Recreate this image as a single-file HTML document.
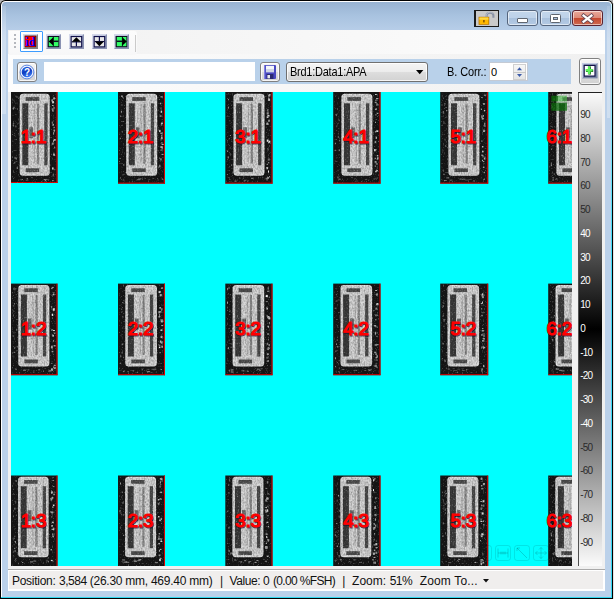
<!DOCTYPE html>
<html><head><meta charset="utf-8"><title>APA view</title>
<style>
html,body{margin:0;padding:0}
body{width:615px;height:599px;position:relative;overflow:hidden;background:#fff;font-family:"Liberation Sans",Arial,sans-serif;font-size:11px;color:#000}
#win{position:absolute;left:0;top:0;width:613px;height:599px;background:#000;border-radius:5.5px 5.5px 0 0;overflow:hidden}
#corner-l,#corner-r{position:absolute;top:0;width:6px;height:6px;background:#b4b4b4}
#frame{position:absolute;left:1px;top:1px;width:611px;height:597px;border-radius:4.5px 4.5px 0 0;background:#fff;overflow:hidden}
#frame2{position:absolute;left:1px;top:1px;width:609px;height:595px;border-radius:3.5px 3.5px 0 0;background:linear-gradient(to bottom,#98b3d2 0px,#a9c3e0 14px,#b9cfe9 30px,#bbd1ea 40px,#bbd1ea 100%)}
#cy-r{position:absolute;left:611px;top:4px;width:1px;height:593px;background:linear-gradient(to bottom,#c8f4ff,#40dcf8 40%,#30d8f4)}
#cy-b{position:absolute;left:1px;top:597px;width:611px;height:1px;background:#30d8f0}
#client{position:absolute;left:8px;top:30px;width:597px;height:561px;background:#f0f0f0}
.abs{position:absolute}
.sl{position:absolute;left:580.3px;width:24px;height:12px;line-height:12px;font-size:10px;letter-spacing:-0.9px;white-space:nowrap}
.cap{position:absolute;top:10px;height:14px;border:1px solid #55657d;border-radius:3px;box-shadow:inset 0 0 0 1px rgba(255,255,255,.55);background:linear-gradient(to bottom,#c3d6eb 0,#bdd2e9 49%,#a9c1dd 50%,#b4cae4 100%)}
.tb{position:absolute;top:34px;width:15px;height:15px}
.btn{position:absolute;border:1px solid #808080;border-radius:3px;background:linear-gradient(to bottom,#f4f4f4 0,#ececec 49%,#dedede 50%,#d2d2d2 100%);box-shadow:inset 0 0 0 1px rgba(255,255,255,.8);box-sizing:border-box}
.st{position:absolute;top:573px;height:16px;line-height:16px;font-size:12px;white-space:nowrap;color:#111}
</style></head><body>
<div id="corner-l" style="left:0"></div><div id="corner-r" style="left:607px"></div>
<div id="win"><div id="frame"><div id="frame2"></div></div></div>
<div class="abs" style="left:2px;top:6px;width:3.5px;height:108px;background:linear-gradient(to bottom,rgba(255,255,255,0.12),rgba(255,255,255,0.3) 30%,rgba(255,255,255,0.3))"></div><div class="abs" style="left:606.5px;top:6px;width:3.5px;height:112px;background:linear-gradient(to bottom,rgba(255,255,255,0.12),rgba(255,255,255,0.3) 30%,rgba(255,255,255,0.3))"></div>
<div id="cy-r"></div><div id="cy-b"></div>
<div class="abs" style="left:612px;top:4px;width:1px;height:595px;background:#000"></div>
<div class="abs" style="left:613px;top:3px;width:1px;height:596px;background:#e4e4e4"></div>

<!-- caption buttons -->
<div class="abs" style="left:474.4px;top:10px;width:24.7px;height:16.5px;background:#1a1a1a"></div>
<div class="abs" style="left:475.5px;top:11.2px;width:22.6px;height:14.4px;background:#cacaca"></div>
<svg class="abs" style="left:476px;top:11px" width="22" height="15" viewBox="0 0 22 15">
<path d="M10.6 7V4.4C10.6 0.8 17.4 0.8 17.4 4.4V6.8" fill="none" stroke="#8a93a6" stroke-width="2.1"/>
<path d="M10.2 6V4.2C10.4 0.9 16 0.2 17.2 2.6" fill="none" stroke="#c4cad6" stroke-width="0.8"/>
<rect x="2.6" y="5.8" width="10.6" height="8" fill="#b87400"/>
<rect x="3.4" y="6.5" width="9" height="6.6" fill="#ffb800"/>
<rect x="3.4" y="6.5" width="9" height="2.2" fill="#ffd840"/>
<rect x="7.2" y="9" width="1.4" height="2.4" fill="#7a4a00"/>
</svg>
<div class="cap" style="left:507px;width:29px"></div>
<div class="cap" style="left:540px;width:29px"></div>
<div class="cap" style="left:572px;width:28.6px;border-color:#5a2230;background:linear-gradient(to bottom,#e9a99b 0,#dd8a78 49%,#c4472e 50%,#cf6a50 100%)"></div>
<div class="abs" style="left:517px;top:18px;width:10.5px;height:4.5px;background:#fff;border:1px solid #5f6670;box-sizing:border-box;border-radius:1px"></div>
<div class="abs" style="left:550px;top:14px;width:11px;height:8.5px;background:#fff;border:1px solid #5f6670;box-sizing:border-box;border-radius:1.5px"></div>
<div class="abs" style="left:552.6px;top:16.6px;width:5.6px;height:3.3px;background:#a9c1dd;border:1px solid #5f6670;box-sizing:border-box"></div>
<svg class="abs" style="left:581px;top:13px" width="13" height="11" viewBox="0 0 13 11"><path d="M2.6 2.6L10.4 8.6M10.4 2.6L2.6 8.6" stroke="#6a4a55" stroke-width="4" stroke-linecap="square"/><path d="M2.6 2.6L10.4 8.6M10.4 2.6L2.6 8.6" stroke="#fff" stroke-width="2.3" stroke-linecap="square"/></svg>

<div id="client"></div>
<!-- toolbar row 1 -->
<div class="abs" style="left:8px;top:30px;width:597px;height:24px;background:linear-gradient(to right,#f1f1f1,#fdfdfd)"></div>
<div class="abs" style="left:8px;top:54px;width:597px;height:38px;background:linear-gradient(to right,#fdfdfd,#f0f0f0)"></div>
<div class="abs" style="left:9px;top:31px;width:128px;height:24px;border-radius:0 3px 3px 0;background:linear-gradient(to bottom,#fcfcfc,#f7f7f8)"></div>
<div class="abs" style="left:14px;top:34px;width:2px;height:2px;background:#b4b7bd;box-shadow:0 4px #b4b7bd,0 8px #b4b7bd,0 12px #b4b7bd"></div>
<div class="abs" style="left:135px;top:35px;width:1px;height:17px;background:#cacaca"></div>
<div class="abs" style="left:20px;top:31px;width:23px;height:21px;box-sizing:border-box;border:1px solid #3d9cff;background:#fff;border-radius:1px"></div>
<!-- icons -->
<svg class="tb" style="left:23.4px" viewBox="0 0 15 15"><rect width="15" height="15" fill="#808080"/><path d="M0 15L0 0L15 0L13 2L2 2L2 13Z" fill="#d4d8e8"/><rect x="1.6" y="1.6" width="11.5" height="11.5" fill="#3a0000"/><rect x="2.2" y="2.4" width="10.4" height="10.2" fill="#ff0000"/><text x="7.3" y="11.9" font-family="'Liberation Serif',serif" font-weight="bold" font-size="11.5" fill="#0000ff" text-anchor="middle" textLength="9.6" lengthAdjust="spacingAndGlyphs">id</text></svg>
<svg class="tb" style="left:46px" viewBox="0 0 15 15"><rect width="15" height="15" fill="#8a92b2"/><path d="M0 15L0 0L15 0L13.2 1.8L1.8 1.8L1.8 13.2Z" fill="#d4d8ea"/><rect x="1.6" y="2" width="11.6" height="11.2" fill="#0c1020"/><rect x="2.8" y="3" width="9.6" height="9.2" fill="#33ff66"/><path d="M7.3 3V12.2" stroke="#0c1020" stroke-width="1"/><path d="M7.3 7.3H12.4" stroke="#0c1020" stroke-width="1.5"/><path d="M2.6 7.4L7.3 3.2V11.6Z" fill="#000"/></svg>
<svg class="tb" style="left:68.6px" viewBox="0 0 15 15"><rect width="15" height="15" fill="#8a92b2"/><path d="M0 15L0 0L15 0L13.2 1.8L1.8 1.8L1.8 13.2Z" fill="#d4d8ea"/><rect x="1.6" y="2" width="11.6" height="11.4" fill="#10104a"/><rect x="2.7" y="3.1" width="9.4" height="9.2" fill="#e9e9e9"/><path d="M7.4 7V12.3" stroke="#10104a" stroke-width="1.2"/><path d="M2.7 7.9H12.1" stroke="#10104a" stroke-width="1.1"/><path d="M7.4 3.2L11.9 7.8H2.9Z" fill="#000"/></svg>
<svg class="tb" style="left:91.5px" viewBox="0 0 15 15"><rect width="15" height="15" fill="#8a92b2"/><path d="M0 15L0 0L15 0L13.2 1.8L1.8 1.8L1.8 13.2Z" fill="#d4d8ea"/><rect x="1.6" y="2" width="11.6" height="11.4" fill="#10104a"/><rect x="2.7" y="3.1" width="9.4" height="9.2" fill="#e9e9e9"/><path d="M7.4 3.1V8" stroke="#10104a" stroke-width="1.2"/><path d="M2.7 7.5H12.1" stroke="#10104a" stroke-width="1.1"/><path d="M7.4 12.2L11.9 7.6H2.9Z" fill="#000"/></svg>
<svg class="tb" style="left:114.2px" viewBox="0 0 15 15"><rect width="15" height="15" fill="#8a92b2"/><path d="M0 15L0 0L15 0L13.2 1.8L1.8 1.8L1.8 13.2Z" fill="#d4d8ea"/><rect x="1.6" y="2" width="11.6" height="11.2" fill="#0c1020"/><rect x="2.8" y="3" width="9.6" height="9.2" fill="#33ff66"/><path d="M8.4 3V12.2" stroke="#0c1020" stroke-width="1"/><path d="M2.8 7.3H8.4" stroke="#0c1020" stroke-width="1.5"/><path d="M12.8 7.4L8.4 3.2V11.6Z" fill="#000"/></svg>

<!-- toolbar row 2 -->
<div class="abs" style="left:13px;top:59px;width:558px;height:25px;background:#b9d1ea"></div>
<div class="btn" style="left:17px;top:62px;width:20px;height:20px"></div>
<svg class="abs" style="left:18.8px;top:64px" width="16" height="16" viewBox="0 0 16 16"><defs><linearGradient id="hg" x1="0" y1="0" x2="0.4" y2="1"><stop offset="0" stop-color="#2a66e8"/><stop offset="0.55" stop-color="#0e3cc0"/><stop offset="1" stop-color="#3a78f0"/></linearGradient></defs><circle cx="8" cy="8" r="6.9" fill="#eef3ff" stroke="#4a78dc" stroke-width="0.9"/><circle cx="8" cy="8" r="5.3" fill="url(#hg)"/><text x="8" y="11.6" font-family="'Liberation Sans',sans-serif" font-weight="bold" font-size="10" fill="#fff" text-anchor="middle">?</text></svg>
<div class="abs" style="left:43.5px;top:62px;width:211.5px;height:18.6px;background:#fff"></div>
<div class="btn" style="left:260px;top:62px;width:20px;height:20px"></div>
<svg class="abs" style="left:264px;top:65px" width="12" height="14" viewBox="0 0 12 14"><rect x="0" y="0" width="12" height="14" rx="1" fill="#4848c0"/><rect x="0" y="0" width="1.2" height="14" fill="#8080e0"/><rect x="2" y="0.8" width="8" height="6.4" fill="#f4f6fa"/><rect x="2" y="4" width="8" height="3.2" fill="#cfd6e6"/><rect x="2.6" y="9" width="6.8" height="5" fill="#2a2a70"/><rect x="3.4" y="10" width="2.6" height="3.4" fill="#e8e8f0"/></svg>
<div class="btn" style="left:286px;top:62px;width:142px;height:20px;border-color:#707070"></div>
<div class="abs" style="left:290px;top:65px;height:14px;line-height:14px;font-size:11px;letter-spacing:-0.25px;white-space:nowrap;transform:scaleY(1.08);transform-origin:0 80%" id="cbt">Brd1:Data1:APA</div>
<svg class="abs" style="left:416px;top:70px" width="8" height="5" viewBox="0 0 8 5"><path d="M0 0H7.4L3.7 4.2Z" fill="#000"/></svg>
<div class="abs" style="left:447px;top:65px;height:14px;line-height:14px;font-size:11px;letter-spacing:-0.1px;white-space:nowrap;transform:scaleY(1.08);transform-origin:0 80%" id="bct">B. Corr.:</div>
<div class="abs" style="left:489px;top:62px;width:39px;height:19px;background:#fff;border:1px solid #c4cad4;box-sizing:border-box"></div>
<div class="abs" style="left:491px;top:65px;height:14px;line-height:14px;font-size:11px">0</div>
<div class="abs" style="left:513px;top:64px;width:13px;height:16px;background:linear-gradient(to bottom,#f8f8f8,#e4e4e4);box-shadow:0 0 0 1px #d0d0d0 inset"></div>
<div class="abs" style="left:513px;top:72px;width:13px;height:1px;background:#c8c8c8"></div>
<svg class="abs" style="left:516px;top:66px" width="8" height="12" viewBox="0 0 8 12"><path d="M1 4.2L3.5 1.2L6 4.2Z" fill="#3c5aa8"/><path d="M1 8L3.5 11L6 8Z" fill="#3c5aa8"/></svg>
<div class="btn" style="left:579px;top:58px;width:22px;height:27px"></div>
<svg class="abs" style="left:582.4px;top:63.2px" width="15.6" height="15.4" viewBox="0 0 15.6 15.4"><rect width="15.6" height="15.4" fill="#7a86a6"/><path d="M0 15.4L0 0L15.6 0L13.8 1.6L1.6 1.6L1.6 13.8Z" fill="#c4cce4"/><rect x="1.6" y="1.8" width="12" height="11.9" fill="#14144a"/><rect x="2.8" y="3" width="9.6" height="9.5" fill="#fff"/><path d="M7.6 3.6V11.6M4 7.8H11.2" stroke="#0c500c" stroke-width="2.6"/><path d="M7.1 3.2V11M3.6 7.2H10.6" stroke="#5cf05c" stroke-width="2.5"/></svg>

<svg id="img" width="561" height="474" viewBox="0 0 561 474" style="position:absolute;left:11px;top:92px;display:block">
<defs>
<filter id="grain" x="0" y="0" width="100%" height="100%" color-interpolation-filters="sRGB">
<feTurbulence type="fractalNoise" baseFrequency="0.75 0.5" numOctaves="2" seed="3" result="n"/>
<feColorMatrix in="n" type="matrix" values="0 0 0 0 0  0 0 0 0 0  0 0 0 0 0  0.55 0 0 0 -0.18" result="a"/>
<feComposite in="a" in2="SourceGraphic" operator="in"/>
</filter>
<filter id="grainw" x="0" y="0" width="100%" height="100%" color-interpolation-filters="sRGB">
<feTurbulence type="fractalNoise" baseFrequency="0.8 0.55" numOctaves="2" seed="11" result="n"/>
<feColorMatrix in="n" type="matrix" values="0 0 0 0 1  0 0 0 0 1  0 0 0 0 1  0 1.1 0 0 -0.64" result="a"/>
<feComposite in="a" in2="SourceGraphic" operator="in"/>
</filter>
</defs>
<rect width="561" height="474" fill="#00ffff"/>
<g id="mods">
<g transform="translate(0.0,0.0)">
<rect width="46.5" height="91" fill="#171717"/>
<rect x="8.7" y="1.8" width="30" height="82" rx="3.5" fill="#e6e6e6"/>
<rect x="9.7" y="2.8" width="28.0" height="80.0" rx="2.6" fill="#d6d6d6"/>
<rect x="14.7" y="5.1" width="13.5" height="3.8" fill="#505050"/>
<rect x="11.3" y="11.3" width="6" height="62" fill="#3c3c3c"/>
<rect x="25.9" y="11.8" width="2.2" height="60" fill="#8c8c8c"/>
<rect x="22.9" y="12.8" width="1.2" height="58" fill="#b4b4b4"/>
<rect x="33.3" y="11.3" width="3.3" height="62" fill="#4c4c4c"/>
<rect x="14.7" y="76.3" width="13.5" height="3.8" fill="#505050"/>
<rect x="18.3" y="35.3" width="3.8" height="11" fill="#6e6e6e"/>
<rect x="40.7" y="29.5" width="1" height="2.2" fill="rgb(132,132,132)"/>
<rect x="42.1" y="10.0" width="1" height="1" fill="rgb(249,249,249)"/>
<rect x="41.5" y="9.3" width="1" height="2.2" fill="rgb(181,181,181)"/>
<rect x="42.8" y="38.1" width="1" height="2.2" fill="rgb(151,151,151)"/>
<rect x="43.2" y="55.3" width="1" height="1" fill="rgb(221,221,221)"/>
<rect x="42.9" y="6.0" width="1.5" height="1" fill="rgb(194,194,194)"/>
<rect x="42.0" y="48.0" width="1" height="2.2" fill="rgb(166,166,166)"/>
<rect x="40.8" y="50.6" width="2" height="2.2" fill="rgb(144,144,144)"/>
<rect x="40.4" y="7.3" width="1.5" height="2.2" fill="rgb(172,172,172)"/>
<rect x="42.7" y="47.2" width="2" height="1.5" fill="rgb(239,239,239)"/>
<rect x="41.0" y="32.7" width="2" height="1" fill="rgb(166,166,166)"/>
<rect x="41.2" y="9.0" width="1.5" height="2.2" fill="rgb(246,246,246)"/>
<rect x="42.1" y="40.2" width="1" height="2.2" fill="rgb(138,138,138)"/>
<rect x="42.6" y="37.5" width="1.5" height="1.5" fill="rgb(158,158,158)"/>
<rect x="42.3" y="5.3" width="1.5" height="2.2" fill="rgb(200,200,200)"/>
<rect x="41.8" y="31.8" width="1" height="1" fill="rgb(236,236,236)"/>
<rect x="41.7" y="82.3" width="1" height="2.2" fill="rgb(136,136,136)"/>
<rect x="42.3" y="61.6" width="1.5" height="2.2" fill="rgb(234,234,234)"/>
<rect x="42.3" y="34.8" width="1.5" height="1.5" fill="rgb(125,125,125)"/>
<rect x="40.6" y="16.3" width="1" height="1.5" fill="rgb(135,135,135)"/>
<rect x="41.0" y="13.0" width="1.5" height="1" fill="rgb(220,220,220)"/>
<rect x="41.5" y="16.1" width="1" height="1.5" fill="rgb(191,191,191)"/>
<rect x="41.1" y="75.4" width="1.5" height="2.2" fill="rgb(226,226,226)"/>
<rect x="43.3" y="77.2" width="1" height="1" fill="rgb(158,158,158)"/>
<rect x="42.3" y="14.9" width="1.5" height="2.2" fill="rgb(123,123,123)"/>
<rect x="41.1" y="17.5" width="1.5" height="2.2" fill="rgb(157,157,157)"/>
<rect x="4.0" y="33.4" width="1" height="2" fill="rgb(86,86,86)"/>
<rect x="5.8" y="75.0" width="1" height="2" fill="rgb(153,153,153)"/>
<rect x="3.6" y="64.9" width="1" height="2" fill="rgb(169,169,169)"/>
<rect x="3.3" y="69.8" width="1" height="1.5" fill="rgb(121,121,121)"/>
<rect x="4.4" y="10.8" width="1" height="1" fill="rgb(77,77,77)"/>
<rect x="2.4" y="7.7" width="1" height="1" fill="rgb(90,90,90)"/>
<rect x="1.7" y="30.9" width="1" height="2" fill="rgb(70,70,70)"/>
<rect x="2.0" y="14.9" width="1" height="2" fill="rgb(116,116,116)"/>
<rect x="5.4" y="4.2" width="1" height="1.5" fill="rgb(148,148,148)"/>
<rect x="2.6" y="14.6" width="1" height="2" fill="rgb(114,114,114)"/>
<rect x="2.1" y="33.0" width="1" height="1.5" fill="rgb(132,132,132)"/>
<rect x="2.9" y="42.8" width="1" height="1" fill="rgb(88,88,88)"/>
<rect x="4.8" y="65.7" width="1" height="2" fill="rgb(131,131,131)"/>
<rect x="1.6" y="15.7" width="1" height="1.5" fill="rgb(137,137,137)"/>
<rect x="8.6" y="87.2" width="3" height="1" fill="rgb(73,73,73)"/>
<rect x="14.5" y="87.6" width="3" height="1" fill="rgb(81,81,81)"/>
<rect x="35.5" y="87.1" width="2" height="1" fill="rgb(91,91,91)"/>
<rect x="32.7" y="87.2" width="3" height="1" fill="rgb(169,169,169)"/>
<rect x="15.7" y="86.1" width="1" height="1" fill="rgb(170,170,170)"/>
<rect x="34.0" y="88.2" width="1" height="1" fill="rgb(164,164,164)"/>
<rect x="10.7" y="87.0" width="1" height="1" fill="rgb(163,163,163)"/>
<rect x="41.1" y="88.1" width="2" height="1" fill="rgb(130,130,130)"/>
<rect x="45.5" y="0" width="1" height="91" fill="#e00000"/>
<rect x="0" y="90" width="46.5" height="1" fill="#e00000"/>
</g>
<g transform="translate(107.0,0.0)">
<rect width="47" height="91.6" fill="#171717"/>
<rect x="8.2" y="1.8" width="31" height="82" rx="3.5" fill="#e6e6e6"/>
<rect x="9.2" y="2.8" width="29.0" height="80.0" rx="2.6" fill="#d6d6d6"/>
<rect x="14.2" y="5.1" width="13.5" height="3.8" fill="#505050"/>
<rect x="10.8" y="11.3" width="6" height="62" fill="#3c3c3c"/>
<rect x="25.4" y="11.8" width="2.2" height="60" fill="#8c8c8c"/>
<rect x="22.4" y="12.8" width="1.2" height="58" fill="#b4b4b4"/>
<rect x="32.8" y="11.3" width="3.3" height="62" fill="#4c4c4c"/>
<rect x="14.2" y="76.3" width="13.5" height="3.8" fill="#505050"/>
<rect x="17.8" y="35.3" width="3.8" height="11" fill="#6e6e6e"/>
<rect x="42.6" y="18.6" width="1.5" height="2.2" fill="rgb(208,208,208)"/>
<rect x="43.8" y="86.6" width="1" height="1" fill="rgb(213,213,213)"/>
<rect x="42.2" y="10.7" width="1" height="1.5" fill="rgb(206,206,206)"/>
<rect x="43.6" y="55.4" width="1.5" height="2.2" fill="rgb(120,120,120)"/>
<rect x="42.8" y="31.4" width="1.5" height="2.2" fill="rgb(150,150,150)"/>
<rect x="42.2" y="66.2" width="1.5" height="2.2" fill="rgb(165,165,165)"/>
<rect x="43.3" y="30.5" width="1.5" height="1.5" fill="rgb(221,221,221)"/>
<rect x="41.0" y="65.6" width="1" height="1" fill="rgb(160,160,160)"/>
<rect x="42.6" y="4.4" width="2" height="1" fill="rgb(239,239,239)"/>
<rect x="42.6" y="54.4" width="2" height="1.5" fill="rgb(241,241,241)"/>
<rect x="42.5" y="15.3" width="1" height="2.2" fill="rgb(125,125,125)"/>
<rect x="42.4" y="57.6" width="1.5" height="1" fill="rgb(155,155,155)"/>
<rect x="41.4" y="72.7" width="1" height="1.5" fill="rgb(184,184,184)"/>
<rect x="43.1" y="44.9" width="1.5" height="2.2" fill="rgb(203,203,203)"/>
<rect x="41.1" y="37.9" width="1.5" height="2.2" fill="rgb(210,210,210)"/>
<rect x="43.6" y="51.9" width="2" height="1" fill="rgb(227,227,227)"/>
<rect x="42.4" y="47.5" width="1.5" height="1" fill="rgb(124,124,124)"/>
<rect x="43.2" y="54.1" width="1" height="1" fill="rgb(158,158,158)"/>
<rect x="43.0" y="42.5" width="1.5" height="2.2" fill="rgb(135,135,135)"/>
<rect x="42.5" y="46.4" width="2" height="1" fill="rgb(147,147,147)"/>
<rect x="41.6" y="23.3" width="2" height="1.5" fill="rgb(145,145,145)"/>
<rect x="43.1" y="50.1" width="1.5" height="1.5" fill="rgb(136,136,136)"/>
<rect x="42.3" y="54.4" width="2" height="1.5" fill="rgb(171,171,171)"/>
<rect x="42.4" y="40.7" width="2" height="1" fill="rgb(242,242,242)"/>
<rect x="43.5" y="61.9" width="2" height="1" fill="rgb(186,186,186)"/>
<rect x="41.1" y="73.9" width="1.5" height="1.5" fill="rgb(151,151,151)"/>
<rect x="4.5" y="29.0" width="1" height="1" fill="rgb(124,124,124)"/>
<rect x="2.9" y="20.2" width="1" height="1" fill="rgb(85,85,85)"/>
<rect x="4.4" y="82.4" width="1" height="1" fill="rgb(116,116,116)"/>
<rect x="2.1" y="23.7" width="1" height="1" fill="rgb(129,129,129)"/>
<rect x="1.9" y="65.9" width="1" height="1" fill="rgb(132,132,132)"/>
<rect x="5.2" y="86.7" width="1" height="2" fill="rgb(90,90,90)"/>
<rect x="3.8" y="38.9" width="1" height="1.5" fill="rgb(113,113,113)"/>
<rect x="2.9" y="18.8" width="1" height="1.5" fill="rgb(162,162,162)"/>
<rect x="4.0" y="3.7" width="1" height="2" fill="rgb(126,126,126)"/>
<rect x="3.0" y="3.5" width="1" height="1.5" fill="rgb(149,149,149)"/>
<rect x="1.8" y="45.8" width="1" height="1" fill="rgb(170,170,170)"/>
<rect x="2.0" y="85.2" width="1" height="1.5" fill="rgb(103,103,103)"/>
<rect x="5.0" y="5.4" width="1" height="1" fill="rgb(104,104,104)"/>
<rect x="5.3" y="72.2" width="1" height="1.5" fill="rgb(156,156,156)"/>
<rect x="18.8" y="87.2" width="3" height="1" fill="rgb(135,135,135)"/>
<rect x="22.3" y="86.4" width="1" height="1" fill="rgb(105,105,105)"/>
<rect x="34.2" y="85.9" width="2" height="1" fill="rgb(79,79,79)"/>
<rect x="39.6" y="87.5" width="1" height="1" fill="rgb(103,103,103)"/>
<rect x="26.7" y="86.1" width="1" height="1" fill="rgb(103,103,103)"/>
<rect x="20.7" y="86.5" width="2" height="1" fill="rgb(140,140,140)"/>
<rect x="39.1" y="86.2" width="1" height="1" fill="rgb(86,86,86)"/>
<rect x="23.5" y="86.1" width="1" height="1" fill="rgb(84,84,84)"/>
<rect x="46" y="0" width="1" height="91.6" fill="#e00000"/>
<rect x="0" y="90.6" width="47" height="1" fill="#e00000"/>
</g>
<g transform="translate(214.3,0.0)">
<rect width="47.2" height="91.6" fill="#171717"/>
<rect x="8.2" y="1.8" width="31" height="82" rx="3.5" fill="#e6e6e6"/>
<rect x="9.2" y="2.8" width="29.0" height="80.0" rx="2.6" fill="#d6d6d6"/>
<rect x="14.2" y="5.1" width="13.5" height="3.8" fill="#505050"/>
<rect x="10.8" y="11.3" width="6" height="62" fill="#3c3c3c"/>
<rect x="25.4" y="11.8" width="2.2" height="60" fill="#8c8c8c"/>
<rect x="22.4" y="12.8" width="1.2" height="58" fill="#b4b4b4"/>
<rect x="32.8" y="11.3" width="3.3" height="62" fill="#4c4c4c"/>
<rect x="14.2" y="76.3" width="13.5" height="3.8" fill="#505050"/>
<rect x="17.8" y="35.3" width="3.8" height="11" fill="#6e6e6e"/>
<rect x="41.3" y="24.4" width="2" height="1.5" fill="rgb(199,199,199)"/>
<rect x="41.4" y="47.5" width="2" height="2.2" fill="rgb(234,234,234)"/>
<rect x="41.8" y="17.2" width="1.5" height="1" fill="rgb(124,124,124)"/>
<rect x="43.0" y="3.3" width="2" height="1.5" fill="rgb(168,168,168)"/>
<rect x="42.1" y="23.0" width="2" height="1.5" fill="rgb(230,230,230)"/>
<rect x="43.5" y="48.7" width="1.5" height="2.2" fill="rgb(249,249,249)"/>
<rect x="41.4" y="20.4" width="2" height="2.2" fill="rgb(170,170,170)"/>
<rect x="42.0" y="56.4" width="1" height="1" fill="rgb(208,208,208)"/>
<rect x="42.7" y="3.2" width="1.5" height="1" fill="rgb(185,185,185)"/>
<rect x="42.8" y="6.7" width="2" height="2.2" fill="rgb(217,217,217)"/>
<rect x="42.6" y="85.1" width="1" height="1.5" fill="rgb(195,195,195)"/>
<rect x="41.6" y="17.9" width="1.5" height="1.5" fill="rgb(120,120,120)"/>
<rect x="43.8" y="84.3" width="1" height="1" fill="rgb(202,202,202)"/>
<rect x="41.7" y="84.7" width="1" height="1" fill="rgb(211,211,211)"/>
<rect x="41.0" y="30.7" width="2" height="2.2" fill="rgb(191,191,191)"/>
<rect x="42.3" y="19.2" width="1" height="1.5" fill="rgb(121,121,121)"/>
<rect x="41.2" y="71.9" width="1.5" height="1" fill="rgb(130,130,130)"/>
<rect x="42.7" y="27.6" width="2" height="2.2" fill="rgb(141,141,141)"/>
<rect x="41.2" y="75.0" width="1.5" height="2.2" fill="rgb(219,219,219)"/>
<rect x="41.2" y="86.3" width="1" height="2.2" fill="rgb(157,157,157)"/>
<rect x="42.7" y="78.4" width="1" height="2.2" fill="rgb(249,249,249)"/>
<rect x="42.5" y="66.4" width="2" height="2.2" fill="rgb(124,124,124)"/>
<rect x="43.0" y="70.3" width="1" height="1" fill="rgb(178,178,178)"/>
<rect x="42.7" y="5.6" width="1.5" height="1.5" fill="rgb(146,146,146)"/>
<rect x="42.7" y="49.8" width="1.5" height="1.5" fill="rgb(182,182,182)"/>
<rect x="43.3" y="2.3" width="2" height="1" fill="rgb(248,248,248)"/>
<rect x="1.8" y="58.4" width="1" height="1.5" fill="rgb(164,164,164)"/>
<rect x="1.8" y="23.6" width="1" height="1" fill="rgb(103,103,103)"/>
<rect x="2.4" y="64.4" width="1" height="2" fill="rgb(164,164,164)"/>
<rect x="3.7" y="85.5" width="1" height="1" fill="rgb(118,118,118)"/>
<rect x="4.6" y="43.0" width="1" height="1" fill="rgb(168,168,168)"/>
<rect x="4.4" y="54.8" width="1" height="2" fill="rgb(79,79,79)"/>
<rect x="2.6" y="14.6" width="1" height="2" fill="rgb(165,165,165)"/>
<rect x="4.1" y="28.1" width="1" height="1.5" fill="rgb(71,71,71)"/>
<rect x="2.7" y="7.2" width="1" height="1" fill="rgb(156,156,156)"/>
<rect x="4.5" y="61.3" width="1" height="2" fill="rgb(107,107,107)"/>
<rect x="3.6" y="46.2" width="1" height="1" fill="rgb(129,129,129)"/>
<rect x="4.0" y="87.0" width="1" height="1" fill="rgb(109,109,109)"/>
<rect x="1.6" y="82.1" width="1" height="1" fill="rgb(128,128,128)"/>
<rect x="5.9" y="72.2" width="1" height="1.5" fill="rgb(127,127,127)"/>
<rect x="18.2" y="88.5" width="1" height="1" fill="rgb(96,96,96)"/>
<rect x="25.8" y="85.8" width="2" height="1" fill="rgb(137,137,137)"/>
<rect x="40.3" y="85.8" width="3" height="1" fill="rgb(150,150,150)"/>
<rect x="14.0" y="85.7" width="1" height="1" fill="rgb(116,116,116)"/>
<rect x="22.5" y="88.4" width="1" height="1" fill="rgb(120,120,120)"/>
<rect x="9.2" y="88.6" width="2" height="1" fill="rgb(157,157,157)"/>
<rect x="18.9" y="87.8" width="2" height="1" fill="rgb(123,123,123)"/>
<rect x="17.7" y="85.7" width="1" height="1" fill="rgb(112,112,112)"/>
<rect x="46.2" y="0" width="1" height="91.6" fill="#e00000"/>
<rect x="0" y="90.6" width="47.2" height="1" fill="#e00000"/>
</g>
<g transform="translate(322.2,0.0)">
<rect width="47.3" height="91.6" fill="#171717"/>
<rect x="8.2" y="1.8" width="31" height="82" rx="3.5" fill="#e6e6e6"/>
<rect x="9.2" y="2.8" width="29.0" height="80.0" rx="2.6" fill="#d6d6d6"/>
<rect x="14.2" y="5.1" width="13.5" height="3.8" fill="#505050"/>
<rect x="10.8" y="11.3" width="6" height="62" fill="#3c3c3c"/>
<rect x="25.4" y="11.8" width="2.2" height="60" fill="#8c8c8c"/>
<rect x="22.4" y="12.8" width="1.2" height="58" fill="#b4b4b4"/>
<rect x="32.8" y="11.3" width="3.3" height="62" fill="#4c4c4c"/>
<rect x="14.2" y="76.3" width="13.5" height="3.8" fill="#505050"/>
<rect x="17.8" y="35.3" width="3.8" height="11" fill="#6e6e6e"/>
<rect x="41.8" y="29.8" width="1" height="1" fill="rgb(221,221,221)"/>
<rect x="43.6" y="63.0" width="1.5" height="1.5" fill="rgb(194,194,194)"/>
<rect x="41.9" y="7.6" width="1.5" height="1.5" fill="rgb(139,139,139)"/>
<rect x="43.4" y="66.7" width="1" height="1" fill="rgb(191,191,191)"/>
<rect x="41.6" y="73.4" width="1" height="1.5" fill="rgb(158,158,158)"/>
<rect x="41.7" y="39.3" width="1.5" height="1" fill="rgb(215,215,215)"/>
<rect x="42.7" y="71.5" width="2" height="1" fill="rgb(172,172,172)"/>
<rect x="43.0" y="6.2" width="2" height="1" fill="rgb(235,235,235)"/>
<rect x="41.6" y="57.2" width="2" height="1" fill="rgb(132,132,132)"/>
<rect x="42.0" y="16.6" width="1.5" height="1.5" fill="rgb(192,192,192)"/>
<rect x="43.8" y="65.3" width="1.5" height="2.2" fill="rgb(186,186,186)"/>
<rect x="42.2" y="22.4" width="1" height="1" fill="rgb(220,220,220)"/>
<rect x="40.9" y="57.1" width="1.5" height="2.2" fill="rgb(248,248,248)"/>
<rect x="43.6" y="20.8" width="1.5" height="1" fill="rgb(235,235,235)"/>
<rect x="41.5" y="48.9" width="1.5" height="2.2" fill="rgb(164,164,164)"/>
<rect x="41.5" y="9.8" width="2" height="1" fill="rgb(186,186,186)"/>
<rect x="43.1" y="77.9" width="1.5" height="1.5" fill="rgb(225,225,225)"/>
<rect x="41.4" y="65.8" width="1.5" height="1" fill="rgb(189,189,189)"/>
<rect x="42.5" y="44.6" width="1" height="2.2" fill="rgb(212,212,212)"/>
<rect x="42.7" y="45.1" width="1" height="1.5" fill="rgb(175,175,175)"/>
<rect x="41.9" y="78.8" width="1.5" height="1.5" fill="rgb(234,234,234)"/>
<rect x="43.5" y="74.6" width="1" height="1" fill="rgb(125,125,125)"/>
<rect x="43.1" y="38.4" width="2" height="1.5" fill="rgb(241,241,241)"/>
<rect x="42.0" y="2.0" width="1.5" height="1" fill="rgb(239,239,239)"/>
<rect x="41.4" y="69.0" width="2" height="2.2" fill="rgb(158,158,158)"/>
<rect x="43.3" y="11.3" width="1" height="2.2" fill="rgb(237,237,237)"/>
<rect x="1.5" y="68.5" width="1" height="1" fill="rgb(86,86,86)"/>
<rect x="1.7" y="50.7" width="1" height="1.5" fill="rgb(161,161,161)"/>
<rect x="4.3" y="84.4" width="1" height="2" fill="rgb(137,137,137)"/>
<rect x="4.9" y="39.4" width="1" height="1" fill="rgb(82,82,82)"/>
<rect x="5.7" y="27.7" width="1" height="1.5" fill="rgb(94,94,94)"/>
<rect x="5.1" y="24.3" width="1" height="1" fill="rgb(70,70,70)"/>
<rect x="6.0" y="48.0" width="1" height="1.5" fill="rgb(105,105,105)"/>
<rect x="5.5" y="57.2" width="1" height="2" fill="rgb(130,130,130)"/>
<rect x="2.6" y="22.1" width="1" height="2" fill="rgb(122,122,122)"/>
<rect x="1.7" y="57.6" width="1" height="1.5" fill="rgb(94,94,94)"/>
<rect x="4.4" y="77.7" width="1" height="1.5" fill="rgb(80,80,80)"/>
<rect x="3.4" y="21.5" width="1" height="1" fill="rgb(117,117,117)"/>
<rect x="4.6" y="44.2" width="1" height="1.5" fill="rgb(161,161,161)"/>
<rect x="3.3" y="33.0" width="1" height="1.5" fill="rgb(70,70,70)"/>
<rect x="32.0" y="87.1" width="2" height="1" fill="rgb(96,96,96)"/>
<rect x="41.1" y="86.4" width="1" height="1" fill="rgb(94,94,94)"/>
<rect x="21.3" y="86.2" width="1" height="1" fill="rgb(107,107,107)"/>
<rect x="40.4" y="87.0" width="1" height="1" fill="rgb(93,93,93)"/>
<rect x="22.1" y="88.5" width="3" height="1" fill="rgb(77,77,77)"/>
<rect x="8.8" y="86.7" width="1" height="1" fill="rgb(97,97,97)"/>
<rect x="41.3" y="85.8" width="3" height="1" fill="rgb(76,76,76)"/>
<rect x="5.4" y="86.7" width="2" height="1" fill="rgb(161,161,161)"/>
<rect x="46.3" y="0" width="1" height="91.6" fill="#e00000"/>
<rect x="0" y="90.6" width="47.3" height="1" fill="#e00000"/>
</g>
<g transform="translate(429.2,0.0)">
<rect width="48" height="91.6" fill="#171717"/>
<rect x="8.2" y="1.8" width="31" height="82" rx="3.5" fill="#e6e6e6"/>
<rect x="9.2" y="2.8" width="29.0" height="80.0" rx="2.6" fill="#d6d6d6"/>
<rect x="14.2" y="5.1" width="13.5" height="3.8" fill="#505050"/>
<rect x="10.8" y="11.3" width="6" height="62" fill="#3c3c3c"/>
<rect x="25.4" y="11.8" width="2.2" height="60" fill="#8c8c8c"/>
<rect x="22.4" y="12.8" width="1.2" height="58" fill="#b4b4b4"/>
<rect x="32.8" y="11.3" width="3.3" height="62" fill="#4c4c4c"/>
<rect x="14.2" y="76.3" width="13.5" height="3.8" fill="#505050"/>
<rect x="17.8" y="35.3" width="3.8" height="11" fill="#6e6e6e"/>
<rect x="43.9" y="64.7" width="1.5" height="1" fill="rgb(162,162,162)"/>
<rect x="43.7" y="17.9" width="1" height="1.5" fill="rgb(239,239,239)"/>
<rect x="41.9" y="58.9" width="1.5" height="1.5" fill="rgb(215,215,215)"/>
<rect x="40.7" y="16.5" width="1" height="1.5" fill="rgb(191,191,191)"/>
<rect x="43.5" y="38.0" width="1.5" height="1.5" fill="rgb(173,173,173)"/>
<rect x="41.7" y="67.8" width="1" height="1" fill="rgb(230,230,230)"/>
<rect x="41.3" y="62.4" width="1" height="1.5" fill="rgb(234,234,234)"/>
<rect x="43.6" y="33.2" width="2" height="1.5" fill="rgb(127,127,127)"/>
<rect x="42.7" y="23.2" width="1" height="1.5" fill="rgb(223,223,223)"/>
<rect x="40.9" y="5.0" width="1.5" height="1" fill="rgb(135,135,135)"/>
<rect x="43.6" y="66.0" width="1.5" height="1.5" fill="rgb(206,206,206)"/>
<rect x="43.8" y="30.7" width="1.5" height="2.2" fill="rgb(131,131,131)"/>
<rect x="41.7" y="63.3" width="1.5" height="1" fill="rgb(190,190,190)"/>
<rect x="42.6" y="63.8" width="1" height="1" fill="rgb(136,136,136)"/>
<rect x="43.0" y="11.2" width="1.5" height="1.5" fill="rgb(239,239,239)"/>
<rect x="43.3" y="80.2" width="1.5" height="1" fill="rgb(153,153,153)"/>
<rect x="43.7" y="2.7" width="2" height="1" fill="rgb(197,197,197)"/>
<rect x="41.7" y="54.0" width="1.5" height="1.5" fill="rgb(201,201,201)"/>
<rect x="42.6" y="69.1" width="1.5" height="1" fill="rgb(170,170,170)"/>
<rect x="40.9" y="23.2" width="1.5" height="2.2" fill="rgb(128,128,128)"/>
<rect x="41.2" y="48.6" width="1" height="1" fill="rgb(229,229,229)"/>
<rect x="41.0" y="24.7" width="1.5" height="1.5" fill="rgb(144,144,144)"/>
<rect x="43.8" y="86.6" width="1" height="1" fill="rgb(164,164,164)"/>
<rect x="42.7" y="37.7" width="2" height="2.2" fill="rgb(180,180,180)"/>
<rect x="42.8" y="74.5" width="1.5" height="1.5" fill="rgb(151,151,151)"/>
<rect x="41.6" y="25.9" width="2" height="1.5" fill="rgb(185,185,185)"/>
<rect x="2.6" y="19.1" width="1" height="1" fill="rgb(101,101,101)"/>
<rect x="5.5" y="15.1" width="1" height="1" fill="rgb(144,144,144)"/>
<rect x="3.3" y="29.9" width="1" height="2" fill="rgb(101,101,101)"/>
<rect x="4.4" y="47.1" width="1" height="2" fill="rgb(82,82,82)"/>
<rect x="1.7" y="41.7" width="1" height="1.5" fill="rgb(70,70,70)"/>
<rect x="2.5" y="77.6" width="1" height="1.5" fill="rgb(127,127,127)"/>
<rect x="2.8" y="5.5" width="1" height="1" fill="rgb(85,85,85)"/>
<rect x="5.9" y="18.2" width="1" height="1" fill="rgb(144,144,144)"/>
<rect x="3.2" y="81.6" width="1" height="1.5" fill="rgb(92,92,92)"/>
<rect x="5.0" y="53.6" width="1" height="1" fill="rgb(155,155,155)"/>
<rect x="4.2" y="11.1" width="1" height="1.5" fill="rgb(149,149,149)"/>
<rect x="3.2" y="20.6" width="1" height="1" fill="rgb(88,88,88)"/>
<rect x="2.6" y="19.5" width="1" height="2" fill="rgb(146,146,146)"/>
<rect x="2.4" y="57.8" width="1" height="1.5" fill="rgb(71,71,71)"/>
<rect x="19.4" y="86.6" width="2" height="1" fill="rgb(149,149,149)"/>
<rect x="6.1" y="85.4" width="3" height="1" fill="rgb(133,133,133)"/>
<rect x="22.3" y="86.7" width="3" height="1" fill="rgb(120,120,120)"/>
<rect x="25.0" y="87.5" width="3" height="1" fill="rgb(81,81,81)"/>
<rect x="9.5" y="87.7" width="2" height="1" fill="rgb(122,122,122)"/>
<rect x="29.7" y="86.8" width="2" height="1" fill="rgb(76,76,76)"/>
<rect x="32.8" y="88.4" width="2" height="1" fill="rgb(123,123,123)"/>
<rect x="3.7" y="88.0" width="3" height="1" fill="rgb(116,116,116)"/>
<rect x="47" y="0" width="1" height="91.6" fill="#e00000"/>
<rect x="0" y="90.6" width="48" height="1" fill="#e00000"/>
</g>
<g transform="translate(537.2,0.0)">
<rect width="47" height="91.6" fill="#171717"/>
<rect x="8.2" y="1.8" width="31" height="82" rx="3.5" fill="#e6e6e6"/>
<rect x="9.2" y="2.8" width="29.0" height="80.0" rx="2.6" fill="#d6d6d6"/>
<rect x="14.2" y="5.1" width="13.5" height="3.8" fill="#505050"/>
<rect x="10.8" y="11.3" width="6" height="62" fill="#3c3c3c"/>
<rect x="25.4" y="11.8" width="2.2" height="60" fill="#8c8c8c"/>
<rect x="22.4" y="12.8" width="1.2" height="58" fill="#b4b4b4"/>
<rect x="32.8" y="11.3" width="3.3" height="62" fill="#4c4c4c"/>
<rect x="14.2" y="76.3" width="13.5" height="3.8" fill="#505050"/>
<rect x="17.8" y="35.3" width="3.8" height="11" fill="#6e6e6e"/>
<rect x="43.0" y="18.9" width="1" height="1.5" fill="rgb(172,172,172)"/>
<rect x="42.1" y="79.2" width="1.5" height="2.2" fill="rgb(143,143,143)"/>
<rect x="42.2" y="77.6" width="1" height="1" fill="rgb(161,161,161)"/>
<rect x="41.2" y="6.4" width="1" height="2.2" fill="rgb(221,221,221)"/>
<rect x="41.9" y="55.3" width="1" height="1" fill="rgb(249,249,249)"/>
<rect x="41.2" y="31.8" width="1" height="1" fill="rgb(163,163,163)"/>
<rect x="43.1" y="34.8" width="1.5" height="1" fill="rgb(170,170,170)"/>
<rect x="40.8" y="73.7" width="1.5" height="1" fill="rgb(243,243,243)"/>
<rect x="42.7" y="54.0" width="2" height="2.2" fill="rgb(142,142,142)"/>
<rect x="43.6" y="60.9" width="2" height="1.5" fill="rgb(176,176,176)"/>
<rect x="41.3" y="54.6" width="1" height="2.2" fill="rgb(241,241,241)"/>
<rect x="42.0" y="20.7" width="1.5" height="1.5" fill="rgb(160,160,160)"/>
<rect x="41.5" y="12.5" width="1" height="2.2" fill="rgb(169,169,169)"/>
<rect x="42.9" y="74.1" width="1" height="1.5" fill="rgb(202,202,202)"/>
<rect x="42.5" y="53.3" width="2" height="1.5" fill="rgb(198,198,198)"/>
<rect x="41.5" y="28.4" width="2" height="1.5" fill="rgb(219,219,219)"/>
<rect x="42.1" y="40.2" width="1" height="2.2" fill="rgb(125,125,125)"/>
<rect x="42.2" y="86.4" width="2" height="1.5" fill="rgb(234,234,234)"/>
<rect x="43.3" y="73.6" width="1" height="1" fill="rgb(222,222,222)"/>
<rect x="42.1" y="13.0" width="1.5" height="2.2" fill="rgb(143,143,143)"/>
<rect x="40.8" y="45.7" width="1" height="2.2" fill="rgb(153,153,153)"/>
<rect x="43.0" y="28.9" width="1" height="2.2" fill="rgb(140,140,140)"/>
<rect x="42.8" y="78.6" width="1" height="1" fill="rgb(154,154,154)"/>
<rect x="43.0" y="87.3" width="1" height="1" fill="rgb(148,148,148)"/>
<rect x="42.3" y="86.0" width="2" height="2.2" fill="rgb(162,162,162)"/>
<rect x="40.9" y="81.7" width="2" height="1.5" fill="rgb(209,209,209)"/>
<rect x="5.5" y="15.6" width="1" height="1.5" fill="rgb(105,105,105)"/>
<rect x="3.8" y="14.3" width="1" height="1" fill="rgb(131,131,131)"/>
<rect x="4.3" y="52.7" width="1" height="1.5" fill="rgb(100,100,100)"/>
<rect x="2.4" y="33.9" width="1" height="1" fill="rgb(121,121,121)"/>
<rect x="2.8" y="56.5" width="1" height="1.5" fill="rgb(111,111,111)"/>
<rect x="5.0" y="16.4" width="1" height="2" fill="rgb(84,84,84)"/>
<rect x="5.4" y="6.2" width="1" height="2" fill="rgb(127,127,127)"/>
<rect x="4.6" y="46.6" width="1" height="1.5" fill="rgb(83,83,83)"/>
<rect x="4.3" y="87.0" width="1" height="2" fill="rgb(120,120,120)"/>
<rect x="2.7" y="70.3" width="1" height="2" fill="rgb(117,117,117)"/>
<rect x="3.0" y="14.5" width="1" height="1.5" fill="rgb(80,80,80)"/>
<rect x="4.3" y="21.7" width="1" height="1.5" fill="rgb(76,76,76)"/>
<rect x="2.6" y="72.2" width="1" height="2" fill="rgb(151,151,151)"/>
<rect x="5.5" y="81.5" width="1" height="1" fill="rgb(163,163,163)"/>
<rect x="32.1" y="86.1" width="3" height="1" fill="rgb(107,107,107)"/>
<rect x="27.4" y="86.8" width="1" height="1" fill="rgb(116,116,116)"/>
<rect x="8.1" y="86.1" width="1" height="1" fill="rgb(153,153,153)"/>
<rect x="3.9" y="85.3" width="2" height="1" fill="rgb(115,115,115)"/>
<rect x="7.1" y="86.6" width="2" height="1" fill="rgb(98,98,98)"/>
<rect x="25.8" y="87.4" width="2" height="1" fill="rgb(96,96,96)"/>
<rect x="27.3" y="87.0" width="1" height="1" fill="rgb(87,87,87)"/>
<rect x="39.5" y="86.2" width="2" height="1" fill="rgb(89,89,89)"/>
<rect x="46" y="0" width="1" height="91.6" fill="#e00000"/>
<rect x="0" y="90.6" width="47" height="1" fill="#e00000"/>
</g>
<g transform="translate(0.0,191.6)">
<rect width="46.5" height="91.6" fill="#171717"/>
<rect x="7.3" y="1.4" width="31.1" height="81.6" rx="3.5" fill="#e6e6e6"/>
<rect x="8.3" y="2.4" width="29.1" height="79.6" rx="2.6" fill="#d6d6d6"/>
<rect x="13.3" y="4.7" width="13.5" height="3.8" fill="#505050"/>
<rect x="9.9" y="10.9" width="6" height="62" fill="#3c3c3c"/>
<rect x="24.5" y="11.4" width="2.2" height="60" fill="#8c8c8c"/>
<rect x="21.5" y="12.4" width="1.2" height="58" fill="#b4b4b4"/>
<rect x="31.9" y="10.9" width="3.3" height="62" fill="#4c4c4c"/>
<rect x="13.3" y="75.9" width="13.5" height="3.8" fill="#505050"/>
<rect x="16.9" y="34.9" width="3.8" height="11" fill="#6e6e6e"/>
<rect x="41.9" y="10.2" width="1.5" height="1.5" fill="rgb(189,189,189)"/>
<rect x="40.1" y="84.8" width="2" height="2.2" fill="rgb(209,209,209)"/>
<rect x="41.8" y="51.5" width="1" height="1" fill="rgb(246,246,246)"/>
<rect x="40.0" y="79.3" width="1.5" height="1" fill="rgb(126,126,126)"/>
<rect x="40.1" y="22.3" width="1" height="2.2" fill="rgb(146,146,146)"/>
<rect x="42.9" y="49.2" width="1.5" height="1" fill="rgb(156,156,156)"/>
<rect x="42.0" y="46.4" width="2" height="1" fill="rgb(226,226,226)"/>
<rect x="40.1" y="45.5" width="2" height="1.5" fill="rgb(132,132,132)"/>
<rect x="39.9" y="63.2" width="2" height="1.5" fill="rgb(231,231,231)"/>
<rect x="42.0" y="8.9" width="1" height="1" fill="rgb(164,164,164)"/>
<rect x="42.0" y="24.4" width="1.5" height="2.2" fill="rgb(151,151,151)"/>
<rect x="42.9" y="81.2" width="2" height="1" fill="rgb(187,187,187)"/>
<rect x="41.7" y="24.8" width="2" height="2.2" fill="rgb(231,231,231)"/>
<rect x="40.8" y="85.2" width="1" height="2.2" fill="rgb(175,175,175)"/>
<rect x="40.7" y="3.3" width="2" height="1" fill="rgb(180,180,180)"/>
<rect x="42.3" y="82.9" width="1" height="1.5" fill="rgb(203,203,203)"/>
<rect x="40.7" y="30.1" width="1.5" height="2.2" fill="rgb(240,240,240)"/>
<rect x="42.6" y="61.7" width="2" height="1" fill="rgb(231,231,231)"/>
<rect x="40.9" y="50.8" width="1.5" height="2.2" fill="rgb(174,174,174)"/>
<rect x="41.7" y="52.1" width="1" height="1" fill="rgb(163,163,163)"/>
<rect x="40.2" y="4.3" width="1.5" height="1" fill="rgb(161,161,161)"/>
<rect x="40.0" y="62.0" width="2" height="2.2" fill="rgb(155,155,155)"/>
<rect x="42.1" y="56.3" width="1" height="2.2" fill="rgb(131,131,131)"/>
<rect x="40.5" y="67.2" width="2" height="1.5" fill="rgb(136,136,136)"/>
<rect x="40.6" y="11.2" width="1" height="1" fill="rgb(148,148,148)"/>
<rect x="42.8" y="83.3" width="2" height="2.2" fill="rgb(142,142,142)"/>
<rect x="1.9" y="26.6" width="1" height="2" fill="rgb(82,82,82)"/>
<rect x="2.9" y="19.5" width="1" height="1.5" fill="rgb(124,124,124)"/>
<rect x="2.7" y="3.8" width="1" height="1" fill="rgb(106,106,106)"/>
<rect x="3.2" y="63.3" width="1" height="2" fill="rgb(111,111,111)"/>
<rect x="5.3" y="45.1" width="1" height="2" fill="rgb(149,149,149)"/>
<rect x="3.4" y="4.7" width="1" height="2" fill="rgb(125,125,125)"/>
<rect x="3.1" y="68.2" width="1" height="1" fill="rgb(160,160,160)"/>
<rect x="2.5" y="48.0" width="1" height="2" fill="rgb(81,81,81)"/>
<rect x="2.3" y="72.2" width="1" height="2" fill="rgb(70,70,70)"/>
<rect x="4.9" y="19.3" width="1" height="1" fill="rgb(76,76,76)"/>
<rect x="1.9" y="31.8" width="1" height="1" fill="rgb(158,158,158)"/>
<rect x="4.2" y="84.8" width="1" height="1.5" fill="rgb(135,135,135)"/>
<rect x="2.2" y="51.5" width="1" height="2" fill="rgb(97,97,97)"/>
<rect x="2.2" y="21.8" width="1" height="1" fill="rgb(151,151,151)"/>
<rect x="21.9" y="88.0" width="1" height="1" fill="rgb(141,141,141)"/>
<rect x="27.2" y="85.7" width="2" height="1" fill="rgb(121,121,121)"/>
<rect x="37.3" y="87.1" width="3" height="1" fill="rgb(124,124,124)"/>
<rect x="4.0" y="85.2" width="2" height="1" fill="rgb(103,103,103)"/>
<rect x="37.7" y="86.3" width="3" height="1" fill="rgb(118,118,118)"/>
<rect x="12.0" y="86.1" width="3" height="1" fill="rgb(138,138,138)"/>
<rect x="32.0" y="87.1" width="1" height="1" fill="rgb(152,152,152)"/>
<rect x="16.4" y="85.6" width="2" height="1" fill="rgb(89,89,89)"/>
<rect x="45.5" y="0" width="1" height="91.6" fill="#e00000"/>
<rect x="0" y="90.6" width="46.5" height="1" fill="#e00000"/>
</g>
<g transform="translate(107.0,191.6)">
<rect width="47" height="91.6" fill="#171717"/>
<rect x="7.3" y="1.4" width="31.6" height="81.6" rx="3.5" fill="#e6e6e6"/>
<rect x="8.3" y="2.4" width="29.6" height="79.6" rx="2.6" fill="#d6d6d6"/>
<rect x="13.3" y="4.7" width="13.5" height="3.8" fill="#505050"/>
<rect x="9.9" y="10.9" width="6" height="62" fill="#3c3c3c"/>
<rect x="24.5" y="11.4" width="2.2" height="60" fill="#8c8c8c"/>
<rect x="21.5" y="12.4" width="1.2" height="58" fill="#b4b4b4"/>
<rect x="31.9" y="10.9" width="3.3" height="62" fill="#4c4c4c"/>
<rect x="13.3" y="75.9" width="13.5" height="3.8" fill="#505050"/>
<rect x="16.9" y="34.9" width="3.8" height="11" fill="#6e6e6e"/>
<rect x="42.8" y="58.7" width="1.5" height="1.5" fill="rgb(163,163,163)"/>
<rect x="41.2" y="61.0" width="1" height="1.5" fill="rgb(179,179,179)"/>
<rect x="43.2" y="41.5" width="2" height="1" fill="rgb(180,180,180)"/>
<rect x="42.8" y="24.9" width="2" height="1" fill="rgb(159,159,159)"/>
<rect x="42.7" y="85.4" width="1" height="1" fill="rgb(209,209,209)"/>
<rect x="41.0" y="30.1" width="1" height="2.2" fill="rgb(146,146,146)"/>
<rect x="41.6" y="10.7" width="1.5" height="2.2" fill="rgb(157,157,157)"/>
<rect x="41.3" y="27.5" width="2" height="1" fill="rgb(147,147,147)"/>
<rect x="43.2" y="26.0" width="1" height="1" fill="rgb(238,238,238)"/>
<rect x="42.9" y="36.2" width="2" height="2.2" fill="rgb(176,176,176)"/>
<rect x="40.5" y="27.4" width="2" height="2.2" fill="rgb(185,185,185)"/>
<rect x="42.8" y="36.6" width="2" height="2.2" fill="rgb(230,230,230)"/>
<rect x="42.5" y="52.3" width="2" height="2.2" fill="rgb(178,178,178)"/>
<rect x="43.2" y="57.9" width="2" height="1" fill="rgb(178,178,178)"/>
<rect x="41.9" y="56.9" width="1.5" height="2.2" fill="rgb(200,200,200)"/>
<rect x="43.3" y="62.0" width="1.5" height="2.2" fill="rgb(182,182,182)"/>
<rect x="40.9" y="63.0" width="1.5" height="1.5" fill="rgb(228,228,228)"/>
<rect x="43.1" y="3.7" width="2" height="1.5" fill="rgb(166,166,166)"/>
<rect x="41.6" y="68.6" width="1" height="1" fill="rgb(245,245,245)"/>
<rect x="41.1" y="23.5" width="2" height="1.5" fill="rgb(171,171,171)"/>
<rect x="42.2" y="10.7" width="2" height="1.5" fill="rgb(172,172,172)"/>
<rect x="42.4" y="45.8" width="2" height="1.5" fill="rgb(214,214,214)"/>
<rect x="43.4" y="37.1" width="2" height="1" fill="rgb(173,173,173)"/>
<rect x="42.8" y="35.6" width="2" height="2.2" fill="rgb(151,151,151)"/>
<rect x="40.6" y="32.4" width="1.5" height="1.5" fill="rgb(190,190,190)"/>
<rect x="40.6" y="7.3" width="2" height="2.2" fill="rgb(227,227,227)"/>
<rect x="4.1" y="59.8" width="1" height="1" fill="rgb(83,83,83)"/>
<rect x="3.3" y="28.0" width="1" height="1" fill="rgb(137,137,137)"/>
<rect x="5.8" y="87.1" width="1" height="1" fill="rgb(129,129,129)"/>
<rect x="5.7" y="16.1" width="1" height="2" fill="rgb(78,78,78)"/>
<rect x="4.4" y="18.5" width="1" height="1" fill="rgb(162,162,162)"/>
<rect x="2.2" y="71.7" width="1" height="2" fill="rgb(155,155,155)"/>
<rect x="5.1" y="73.1" width="1" height="1.5" fill="rgb(122,122,122)"/>
<rect x="4.9" y="87.3" width="1" height="1" fill="rgb(153,153,153)"/>
<rect x="3.6" y="68.8" width="1" height="1" fill="rgb(170,170,170)"/>
<rect x="3.2" y="24.9" width="1" height="1.5" fill="rgb(102,102,102)"/>
<rect x="3.7" y="60.1" width="1" height="1.5" fill="rgb(162,162,162)"/>
<rect x="4.4" y="32.6" width="1" height="1.5" fill="rgb(111,111,111)"/>
<rect x="4.3" y="43.5" width="1" height="2" fill="rgb(80,80,80)"/>
<rect x="2.2" y="78.8" width="1" height="1.5" fill="rgb(108,108,108)"/>
<rect x="5.2" y="87.4" width="1" height="1" fill="rgb(111,111,111)"/>
<rect x="23.7" y="85.7" width="1" height="1" fill="rgb(144,144,144)"/>
<rect x="28.6" y="85.2" width="3" height="1" fill="rgb(79,79,79)"/>
<rect x="14.4" y="86.6" width="1" height="1" fill="rgb(144,144,144)"/>
<rect x="36.3" y="85.1" width="2" height="1" fill="rgb(127,127,127)"/>
<rect x="33.6" y="85.2" width="3" height="1" fill="rgb(121,121,121)"/>
<rect x="9.5" y="87.6" width="1" height="1" fill="rgb(147,147,147)"/>
<rect x="29.1" y="87.6" width="3" height="1" fill="rgb(170,170,170)"/>
<rect x="46" y="0" width="1" height="91.6" fill="#e00000"/>
<rect x="0" y="90.6" width="47" height="1" fill="#e00000"/>
</g>
<g transform="translate(214.3,191.6)">
<rect width="47.2" height="91.6" fill="#171717"/>
<rect x="7.3" y="1.4" width="31.6" height="81.6" rx="3.5" fill="#e6e6e6"/>
<rect x="8.3" y="2.4" width="29.6" height="79.6" rx="2.6" fill="#d6d6d6"/>
<rect x="13.3" y="4.7" width="13.5" height="3.8" fill="#505050"/>
<rect x="9.9" y="10.9" width="6" height="62" fill="#3c3c3c"/>
<rect x="24.5" y="11.4" width="2.2" height="60" fill="#8c8c8c"/>
<rect x="21.5" y="12.4" width="1.2" height="58" fill="#b4b4b4"/>
<rect x="31.9" y="10.9" width="3.3" height="62" fill="#4c4c4c"/>
<rect x="13.3" y="75.9" width="13.5" height="3.8" fill="#505050"/>
<rect x="16.9" y="34.9" width="3.8" height="11" fill="#6e6e6e"/>
<rect x="41.0" y="73.8" width="2" height="1" fill="rgb(174,174,174)"/>
<rect x="41.8" y="65.5" width="2" height="1" fill="rgb(149,149,149)"/>
<rect x="41.1" y="24.6" width="1.5" height="1.5" fill="rgb(155,155,155)"/>
<rect x="41.9" y="49.7" width="2" height="1.5" fill="rgb(156,156,156)"/>
<rect x="40.9" y="23.1" width="1" height="1.5" fill="rgb(121,121,121)"/>
<rect x="42.2" y="42.1" width="1.5" height="1.5" fill="rgb(195,195,195)"/>
<rect x="43.6" y="38.4" width="1" height="2.2" fill="rgb(139,139,139)"/>
<rect x="42.5" y="32.8" width="2" height="1" fill="rgb(125,125,125)"/>
<rect x="43.4" y="60.4" width="1" height="2.2" fill="rgb(204,204,204)"/>
<rect x="42.8" y="43.4" width="1" height="1" fill="rgb(156,156,156)"/>
<rect x="42.4" y="63.5" width="1" height="2.2" fill="rgb(206,206,206)"/>
<rect x="41.9" y="33.3" width="1.5" height="1.5" fill="rgb(173,173,173)"/>
<rect x="41.2" y="31.3" width="1.5" height="1.5" fill="rgb(133,133,133)"/>
<rect x="42.0" y="32.4" width="2" height="1.5" fill="rgb(205,205,205)"/>
<rect x="41.5" y="76.7" width="2" height="1.5" fill="rgb(172,172,172)"/>
<rect x="41.5" y="69.8" width="2" height="1.5" fill="rgb(201,201,201)"/>
<rect x="43.5" y="12.9" width="1" height="1.5" fill="rgb(142,142,142)"/>
<rect x="43.2" y="63.9" width="1.5" height="1.5" fill="rgb(132,132,132)"/>
<rect x="40.5" y="11.3" width="2" height="2.2" fill="rgb(241,241,241)"/>
<rect x="42.0" y="7.1" width="2" height="1" fill="rgb(216,216,216)"/>
<rect x="42.6" y="55.7" width="1" height="1" fill="rgb(141,141,141)"/>
<rect x="41.9" y="59.1" width="1" height="2.2" fill="rgb(164,164,164)"/>
<rect x="40.5" y="17.5" width="2" height="1" fill="rgb(145,145,145)"/>
<rect x="43.0" y="33.6" width="2" height="2.2" fill="rgb(199,199,199)"/>
<rect x="41.4" y="24.1" width="1" height="1.5" fill="rgb(227,227,227)"/>
<rect x="42.2" y="3.7" width="1.5" height="2.2" fill="rgb(133,133,133)"/>
<rect x="5.2" y="46.7" width="1" height="1.5" fill="rgb(169,169,169)"/>
<rect x="5.6" y="51.2" width="1" height="1" fill="rgb(127,127,127)"/>
<rect x="3.2" y="3.2" width="1" height="2" fill="rgb(145,145,145)"/>
<rect x="3.6" y="86.0" width="1" height="2" fill="rgb(122,122,122)"/>
<rect x="4.4" y="10.7" width="1" height="1" fill="rgb(97,97,97)"/>
<rect x="3.4" y="55.7" width="1" height="2" fill="rgb(71,71,71)"/>
<rect x="5.9" y="59.3" width="1" height="1" fill="rgb(81,81,81)"/>
<rect x="2.1" y="76.4" width="1" height="1.5" fill="rgb(72,72,72)"/>
<rect x="2.6" y="63.6" width="1" height="2" fill="rgb(163,163,163)"/>
<rect x="1.7" y="18.0" width="1" height="2" fill="rgb(169,169,169)"/>
<rect x="5.3" y="63.1" width="1" height="1" fill="rgb(163,163,163)"/>
<rect x="4.0" y="27.1" width="1" height="1.5" fill="rgb(133,133,133)"/>
<rect x="5.5" y="59.3" width="1" height="2" fill="rgb(76,76,76)"/>
<rect x="1.8" y="4.7" width="1" height="2" fill="rgb(153,153,153)"/>
<rect x="35.0" y="84.8" width="2" height="1" fill="rgb(109,109,109)"/>
<rect x="31.6" y="85.1" width="3" height="1" fill="rgb(132,132,132)"/>
<rect x="5.3" y="85.8" width="3" height="1" fill="rgb(143,143,143)"/>
<rect x="20.2" y="86.9" width="1" height="1" fill="rgb(88,88,88)"/>
<rect x="17.2" y="86.8" width="2" height="1" fill="rgb(150,150,150)"/>
<rect x="21.7" y="87.2" width="2" height="1" fill="rgb(127,127,127)"/>
<rect x="33.8" y="86.5" width="2" height="1" fill="rgb(107,107,107)"/>
<rect x="5.4" y="87.9" width="3" height="1" fill="rgb(160,160,160)"/>
<rect x="46.2" y="0" width="1" height="91.6" fill="#e00000"/>
<rect x="0" y="90.6" width="47.2" height="1" fill="#e00000"/>
</g>
<g transform="translate(322.2,191.6)">
<rect width="47.3" height="91.6" fill="#171717"/>
<rect x="7.3" y="1.4" width="31.6" height="81.6" rx="3.5" fill="#e6e6e6"/>
<rect x="8.3" y="2.4" width="29.6" height="79.6" rx="2.6" fill="#d6d6d6"/>
<rect x="13.3" y="4.7" width="13.5" height="3.8" fill="#505050"/>
<rect x="9.9" y="10.9" width="6" height="62" fill="#3c3c3c"/>
<rect x="24.5" y="11.4" width="2.2" height="60" fill="#8c8c8c"/>
<rect x="21.5" y="12.4" width="1.2" height="58" fill="#b4b4b4"/>
<rect x="31.9" y="10.9" width="3.3" height="62" fill="#4c4c4c"/>
<rect x="13.3" y="75.9" width="13.5" height="3.8" fill="#505050"/>
<rect x="16.9" y="34.9" width="3.8" height="11" fill="#6e6e6e"/>
<rect x="42.3" y="30.4" width="1" height="2.2" fill="rgb(123,123,123)"/>
<rect x="42.3" y="73.3" width="1.5" height="1.5" fill="rgb(183,183,183)"/>
<rect x="42.3" y="60.6" width="1.5" height="1.5" fill="rgb(179,179,179)"/>
<rect x="41.4" y="60.9" width="1.5" height="1" fill="rgb(188,188,188)"/>
<rect x="43.0" y="52.2" width="1.5" height="1" fill="rgb(130,130,130)"/>
<rect x="43.2" y="71.5" width="1.5" height="2.2" fill="rgb(157,157,157)"/>
<rect x="43.3" y="60.6" width="2" height="1" fill="rgb(208,208,208)"/>
<rect x="42.0" y="48.2" width="1" height="2.2" fill="rgb(217,217,217)"/>
<rect x="41.1" y="81.8" width="2" height="1.5" fill="rgb(134,134,134)"/>
<rect x="41.1" y="41.8" width="2" height="1" fill="rgb(185,185,185)"/>
<rect x="41.9" y="69.8" width="2" height="1.5" fill="rgb(142,142,142)"/>
<rect x="41.1" y="68.1" width="2" height="1.5" fill="rgb(186,186,186)"/>
<rect x="42.3" y="42.8" width="1" height="1" fill="rgb(168,168,168)"/>
<rect x="43.0" y="9.9" width="1.5" height="2.2" fill="rgb(194,194,194)"/>
<rect x="41.7" y="50.3" width="1" height="1" fill="rgb(158,158,158)"/>
<rect x="42.0" y="81.0" width="1.5" height="2.2" fill="rgb(147,147,147)"/>
<rect x="40.7" y="41.7" width="2" height="1" fill="rgb(200,200,200)"/>
<rect x="42.1" y="31.5" width="1" height="1" fill="rgb(125,125,125)"/>
<rect x="43.2" y="19.5" width="2" height="2.2" fill="rgb(244,244,244)"/>
<rect x="43.4" y="20.3" width="1.5" height="1" fill="rgb(191,191,191)"/>
<rect x="42.9" y="83.0" width="1.5" height="1" fill="rgb(153,153,153)"/>
<rect x="43.6" y="31.0" width="1" height="1" fill="rgb(216,216,216)"/>
<rect x="42.2" y="6.4" width="1.5" height="1" fill="rgb(237,237,237)"/>
<rect x="42.4" y="75.9" width="2" height="1" fill="rgb(150,150,150)"/>
<rect x="42.2" y="24.0" width="2" height="2.2" fill="rgb(142,142,142)"/>
<rect x="41.8" y="35.7" width="1.5" height="1" fill="rgb(160,160,160)"/>
<rect x="2.5" y="86.9" width="1" height="1.5" fill="rgb(74,74,74)"/>
<rect x="1.8" y="82.6" width="1" height="1" fill="rgb(140,140,140)"/>
<rect x="1.7" y="73.7" width="1" height="2" fill="rgb(170,170,170)"/>
<rect x="4.4" y="62.7" width="1" height="1" fill="rgb(131,131,131)"/>
<rect x="2.9" y="10.7" width="1" height="1" fill="rgb(70,70,70)"/>
<rect x="2.8" y="59.9" width="1" height="1.5" fill="rgb(145,145,145)"/>
<rect x="2.0" y="66.9" width="1" height="1.5" fill="rgb(111,111,111)"/>
<rect x="2.1" y="24.0" width="1" height="1.5" fill="rgb(131,131,131)"/>
<rect x="2.6" y="16.4" width="1" height="2" fill="rgb(88,88,88)"/>
<rect x="3.6" y="78.4" width="1" height="1" fill="rgb(94,94,94)"/>
<rect x="5.2" y="15.4" width="1" height="2" fill="rgb(79,79,79)"/>
<rect x="5.5" y="76.2" width="1" height="1.5" fill="rgb(87,87,87)"/>
<rect x="5.7" y="84.0" width="1" height="1" fill="rgb(119,119,119)"/>
<rect x="3.5" y="55.8" width="1" height="1.5" fill="rgb(113,113,113)"/>
<rect x="35.3" y="86.2" width="2" height="1" fill="rgb(150,150,150)"/>
<rect x="8.6" y="85.3" width="1" height="1" fill="rgb(77,77,77)"/>
<rect x="31.0" y="86.4" width="2" height="1" fill="rgb(88,88,88)"/>
<rect x="37.2" y="85.4" width="1" height="1" fill="rgb(122,122,122)"/>
<rect x="9.1" y="85.4" width="2" height="1" fill="rgb(107,107,107)"/>
<rect x="34.6" y="85.4" width="2" height="1" fill="rgb(83,83,83)"/>
<rect x="20.9" y="86.2" width="3" height="1" fill="rgb(89,89,89)"/>
<rect x="5.2" y="87.6" width="1" height="1" fill="rgb(155,155,155)"/>
<rect x="46.3" y="0" width="1" height="91.6" fill="#e00000"/>
<rect x="0" y="90.6" width="47.3" height="1" fill="#e00000"/>
</g>
<g transform="translate(429.2,191.6)">
<rect width="48" height="91.6" fill="#171717"/>
<rect x="7.3" y="1.4" width="31.6" height="81.6" rx="3.5" fill="#e6e6e6"/>
<rect x="8.3" y="2.4" width="29.6" height="79.6" rx="2.6" fill="#d6d6d6"/>
<rect x="13.3" y="4.7" width="13.5" height="3.8" fill="#505050"/>
<rect x="9.9" y="10.9" width="6" height="62" fill="#3c3c3c"/>
<rect x="24.5" y="11.4" width="2.2" height="60" fill="#8c8c8c"/>
<rect x="21.5" y="12.4" width="1.2" height="58" fill="#b4b4b4"/>
<rect x="31.9" y="10.9" width="3.3" height="62" fill="#4c4c4c"/>
<rect x="13.3" y="75.9" width="13.5" height="3.8" fill="#505050"/>
<rect x="16.9" y="34.9" width="3.8" height="11" fill="#6e6e6e"/>
<rect x="43.1" y="49.9" width="1.5" height="1" fill="rgb(150,150,150)"/>
<rect x="41.8" y="85.1" width="1" height="1" fill="rgb(186,186,186)"/>
<rect x="41.3" y="10.4" width="1" height="2.2" fill="rgb(161,161,161)"/>
<rect x="40.9" y="85.8" width="1.5" height="2.2" fill="rgb(124,124,124)"/>
<rect x="40.8" y="31.2" width="2" height="1.5" fill="rgb(120,120,120)"/>
<rect x="41.8" y="17.9" width="1" height="1.5" fill="rgb(224,224,224)"/>
<rect x="40.8" y="50.9" width="2" height="1" fill="rgb(166,166,166)"/>
<rect x="41.0" y="62.9" width="1" height="2.2" fill="rgb(140,140,140)"/>
<rect x="42.8" y="64.6" width="1" height="1" fill="rgb(164,164,164)"/>
<rect x="42.7" y="54.4" width="2" height="1.5" fill="rgb(169,169,169)"/>
<rect x="40.6" y="19.3" width="2" height="1" fill="rgb(224,224,224)"/>
<rect x="41.5" y="46.4" width="2" height="1.5" fill="rgb(192,192,192)"/>
<rect x="41.7" y="9.7" width="1" height="2.2" fill="rgb(242,242,242)"/>
<rect x="41.0" y="24.8" width="1" height="1" fill="rgb(213,213,213)"/>
<rect x="42.2" y="62.1" width="1.5" height="2.2" fill="rgb(121,121,121)"/>
<rect x="43.5" y="81.8" width="1" height="1.5" fill="rgb(138,138,138)"/>
<rect x="43.0" y="63.2" width="2" height="1.5" fill="rgb(202,202,202)"/>
<rect x="43.3" y="51.3" width="1" height="2.2" fill="rgb(194,194,194)"/>
<rect x="42.0" y="44.4" width="1" height="1" fill="rgb(154,154,154)"/>
<rect x="41.1" y="84.8" width="1" height="1" fill="rgb(166,166,166)"/>
<rect x="42.2" y="28.7" width="1" height="1" fill="rgb(127,127,127)"/>
<rect x="42.8" y="81.3" width="1" height="2.2" fill="rgb(186,186,186)"/>
<rect x="41.9" y="56.5" width="2" height="1.5" fill="rgb(181,181,181)"/>
<rect x="43.2" y="10.8" width="1" height="1.5" fill="rgb(165,165,165)"/>
<rect x="42.0" y="12.5" width="1.5" height="1" fill="rgb(248,248,248)"/>
<rect x="41.7" y="12.4" width="2" height="2.2" fill="rgb(155,155,155)"/>
<rect x="2.5" y="21.5" width="1" height="2" fill="rgb(155,155,155)"/>
<rect x="3.3" y="41.6" width="1" height="2" fill="rgb(72,72,72)"/>
<rect x="3.4" y="35.3" width="1" height="2" fill="rgb(147,147,147)"/>
<rect x="5.9" y="5.1" width="1" height="1.5" fill="rgb(76,76,76)"/>
<rect x="2.6" y="31.0" width="1" height="2" fill="rgb(112,112,112)"/>
<rect x="5.9" y="39.3" width="1" height="1.5" fill="rgb(111,111,111)"/>
<rect x="1.7" y="74.6" width="1" height="1" fill="rgb(136,136,136)"/>
<rect x="5.7" y="84.0" width="1" height="1.5" fill="rgb(101,101,101)"/>
<rect x="1.6" y="58.8" width="1" height="2" fill="rgb(83,83,83)"/>
<rect x="3.0" y="18.0" width="1" height="2" fill="rgb(95,95,95)"/>
<rect x="2.5" y="59.3" width="1" height="1.5" fill="rgb(123,123,123)"/>
<rect x="5.7" y="68.5" width="1" height="1" fill="rgb(151,151,151)"/>
<rect x="5.5" y="71.3" width="1" height="1" fill="rgb(75,75,75)"/>
<rect x="4.3" y="76.1" width="1" height="2" fill="rgb(156,156,156)"/>
<rect x="13.9" y="86.4" width="3" height="1" fill="rgb(74,74,74)"/>
<rect x="7.0" y="84.9" width="2" height="1" fill="rgb(71,71,71)"/>
<rect x="12.5" y="84.6" width="2" height="1" fill="rgb(84,84,84)"/>
<rect x="16.9" y="85.1" width="3" height="1" fill="rgb(77,77,77)"/>
<rect x="41.4" y="87.7" width="1" height="1" fill="rgb(104,104,104)"/>
<rect x="21.7" y="86.4" width="2" height="1" fill="rgb(88,88,88)"/>
<rect x="8.0" y="85.0" width="2" height="1" fill="rgb(107,107,107)"/>
<rect x="26.1" y="85.5" width="1" height="1" fill="rgb(164,164,164)"/>
<rect x="47" y="0" width="1" height="91.6" fill="#e00000"/>
<rect x="0" y="90.6" width="48" height="1" fill="#e00000"/>
</g>
<g transform="translate(537.2,191.6)">
<rect width="47" height="91.6" fill="#171717"/>
<rect x="7.3" y="1.4" width="31.6" height="81.6" rx="3.5" fill="#e6e6e6"/>
<rect x="8.3" y="2.4" width="29.6" height="79.6" rx="2.6" fill="#d6d6d6"/>
<rect x="13.3" y="4.7" width="13.5" height="3.8" fill="#505050"/>
<rect x="9.9" y="10.9" width="6" height="62" fill="#3c3c3c"/>
<rect x="24.5" y="11.4" width="2.2" height="60" fill="#8c8c8c"/>
<rect x="21.5" y="12.4" width="1.2" height="58" fill="#b4b4b4"/>
<rect x="31.9" y="10.9" width="3.3" height="62" fill="#4c4c4c"/>
<rect x="13.3" y="75.9" width="13.5" height="3.8" fill="#505050"/>
<rect x="16.9" y="34.9" width="3.8" height="11" fill="#6e6e6e"/>
<rect x="41.3" y="65.4" width="2" height="2.2" fill="rgb(236,236,236)"/>
<rect x="42.5" y="50.8" width="2" height="2.2" fill="rgb(171,171,171)"/>
<rect x="43.3" y="33.4" width="2" height="1.5" fill="rgb(197,197,197)"/>
<rect x="41.4" y="42.1" width="1.5" height="1" fill="rgb(182,182,182)"/>
<rect x="42.1" y="18.2" width="1" height="1.5" fill="rgb(221,221,221)"/>
<rect x="43.4" y="15.9" width="2" height="1.5" fill="rgb(202,202,202)"/>
<rect x="41.3" y="44.1" width="1.5" height="1" fill="rgb(175,175,175)"/>
<rect x="40.9" y="68.1" width="2" height="1.5" fill="rgb(137,137,137)"/>
<rect x="40.6" y="39.7" width="1.5" height="1.5" fill="rgb(219,219,219)"/>
<rect x="40.7" y="65.0" width="2" height="2.2" fill="rgb(177,177,177)"/>
<rect x="41.7" y="81.9" width="1" height="2.2" fill="rgb(210,210,210)"/>
<rect x="42.4" y="19.3" width="2" height="1" fill="rgb(190,190,190)"/>
<rect x="42.8" y="65.2" width="1.5" height="2.2" fill="rgb(241,241,241)"/>
<rect x="43.3" y="62.7" width="1.5" height="1" fill="rgb(152,152,152)"/>
<rect x="42.9" y="2.4" width="1.5" height="1.5" fill="rgb(150,150,150)"/>
<rect x="42.2" y="84.4" width="1.5" height="2.2" fill="rgb(226,226,226)"/>
<rect x="41.6" y="54.0" width="2" height="1.5" fill="rgb(235,235,235)"/>
<rect x="41.5" y="26.7" width="1.5" height="2.2" fill="rgb(210,210,210)"/>
<rect x="41.6" y="49.5" width="1" height="2.2" fill="rgb(202,202,202)"/>
<rect x="42.0" y="74.7" width="1.5" height="1" fill="rgb(233,233,233)"/>
<rect x="43.0" y="48.0" width="2" height="1.5" fill="rgb(231,231,231)"/>
<rect x="40.7" y="51.8" width="1.5" height="2.2" fill="rgb(204,204,204)"/>
<rect x="43.5" y="73.7" width="1.5" height="1" fill="rgb(172,172,172)"/>
<rect x="41.2" y="4.2" width="1.5" height="2.2" fill="rgb(247,247,247)"/>
<rect x="42.1" y="68.2" width="2" height="2.2" fill="rgb(231,231,231)"/>
<rect x="41.8" y="64.2" width="1.5" height="1" fill="rgb(238,238,238)"/>
<rect x="3.1" y="52.9" width="1" height="2" fill="rgb(71,71,71)"/>
<rect x="2.5" y="7.8" width="1" height="1.5" fill="rgb(122,122,122)"/>
<rect x="4.4" y="44.9" width="1" height="1" fill="rgb(143,143,143)"/>
<rect x="5.8" y="77.3" width="1" height="1.5" fill="rgb(132,132,132)"/>
<rect x="4.3" y="39.7" width="1" height="1.5" fill="rgb(145,145,145)"/>
<rect x="4.9" y="61.2" width="1" height="1" fill="rgb(81,81,81)"/>
<rect x="3.1" y="33.0" width="1" height="1.5" fill="rgb(79,79,79)"/>
<rect x="2.0" y="45.9" width="1" height="2" fill="rgb(107,107,107)"/>
<rect x="5.7" y="31.4" width="1" height="1.5" fill="rgb(135,135,135)"/>
<rect x="3.9" y="56.0" width="1" height="1" fill="rgb(135,135,135)"/>
<rect x="2.3" y="45.2" width="1" height="1" fill="rgb(93,93,93)"/>
<rect x="4.2" y="55.9" width="1" height="2" fill="rgb(115,115,115)"/>
<rect x="4.4" y="87.1" width="1" height="2" fill="rgb(75,75,75)"/>
<rect x="5.0" y="37.2" width="1" height="2" fill="rgb(109,109,109)"/>
<rect x="29.9" y="84.5" width="2" height="1" fill="rgb(108,108,108)"/>
<rect x="35.8" y="86.6" width="1" height="1" fill="rgb(155,155,155)"/>
<rect x="10.7" y="86.2" width="3" height="1" fill="rgb(140,140,140)"/>
<rect x="13.4" y="86.8" width="3" height="1" fill="rgb(138,138,138)"/>
<rect x="41.9" y="86.5" width="3" height="1" fill="rgb(122,122,122)"/>
<rect x="7.7" y="85.0" width="3" height="1" fill="rgb(167,167,167)"/>
<rect x="7.2" y="84.9" width="3" height="1" fill="rgb(91,91,91)"/>
<rect x="22.1" y="86.1" width="1" height="1" fill="rgb(125,125,125)"/>
<rect x="46" y="0" width="1" height="91.6" fill="#e00000"/>
<rect x="0" y="90.6" width="47" height="1" fill="#e00000"/>
</g>
<g transform="translate(0.0,383.5)">
<rect width="46.5" height="92" fill="#171717"/>
<rect x="7.1" y="1.2" width="30.5" height="80.6" rx="3.5" fill="#e6e6e6"/>
<rect x="8.1" y="2.2" width="28.5" height="78.6" rx="2.6" fill="#d6d6d6"/>
<rect x="13.1" y="4.5" width="13.5" height="3.8" fill="#505050"/>
<rect x="9.7" y="10.7" width="6" height="62" fill="#3c3c3c"/>
<rect x="24.3" y="11.2" width="2.2" height="60" fill="#8c8c8c"/>
<rect x="21.3" y="12.2" width="1.2" height="58" fill="#b4b4b4"/>
<rect x="31.7" y="10.7" width="3.3" height="62" fill="#4c4c4c"/>
<rect x="13.1" y="75.7" width="13.5" height="3.8" fill="#505050"/>
<rect x="16.7" y="34.7" width="3.8" height="11" fill="#6e6e6e"/>
<rect x="41.3" y="57.9" width="1" height="2.2" fill="rgb(202,202,202)"/>
<rect x="40.0" y="22.5" width="1.5" height="2.2" fill="rgb(128,128,128)"/>
<rect x="42.0" y="10.6" width="1.5" height="1" fill="rgb(136,136,136)"/>
<rect x="40.3" y="40.7" width="1" height="1.5" fill="rgb(133,133,133)"/>
<rect x="42.2" y="52.1" width="1" height="2.2" fill="rgb(232,232,232)"/>
<rect x="39.8" y="22.5" width="2" height="1" fill="rgb(160,160,160)"/>
<rect x="42.0" y="29.1" width="1.5" height="1.5" fill="rgb(236,236,236)"/>
<rect x="42.2" y="53.8" width="1" height="1" fill="rgb(246,246,246)"/>
<rect x="41.3" y="60.2" width="1.5" height="1.5" fill="rgb(176,176,176)"/>
<rect x="41.4" y="36.3" width="1" height="1" fill="rgb(125,125,125)"/>
<rect x="40.2" y="16.9" width="1" height="1.5" fill="rgb(167,167,167)"/>
<rect x="40.3" y="36.1" width="2" height="1.5" fill="rgb(205,205,205)"/>
<rect x="41.2" y="30.9" width="1.5" height="1.5" fill="rgb(151,151,151)"/>
<rect x="40.3" y="49.6" width="1.5" height="1.5" fill="rgb(239,239,239)"/>
<rect x="39.2" y="22.4" width="1.5" height="1" fill="rgb(126,126,126)"/>
<rect x="39.5" y="22.8" width="1.5" height="2.2" fill="rgb(170,170,170)"/>
<rect x="39.5" y="73.8" width="1.5" height="1" fill="rgb(233,233,233)"/>
<rect x="40.2" y="15.7" width="1.5" height="2.2" fill="rgb(223,223,223)"/>
<rect x="39.8" y="84.4" width="2" height="1" fill="rgb(241,241,241)"/>
<rect x="40.5" y="21.5" width="2" height="1.5" fill="rgb(153,153,153)"/>
<rect x="40.5" y="53.3" width="2" height="1" fill="rgb(214,214,214)"/>
<rect x="40.7" y="36.8" width="1" height="2.2" fill="rgb(152,152,152)"/>
<rect x="40.8" y="46.1" width="2" height="1.5" fill="rgb(189,189,189)"/>
<rect x="41.4" y="4.5" width="1.5" height="1" fill="rgb(157,157,157)"/>
<rect x="39.4" y="35.5" width="1" height="1.5" fill="rgb(165,165,165)"/>
<rect x="42.0" y="18.2" width="2" height="1.5" fill="rgb(137,137,137)"/>
<rect x="4.9" y="71.2" width="1" height="1" fill="rgb(94,94,94)"/>
<rect x="1.9" y="63.8" width="1" height="1" fill="rgb(106,106,106)"/>
<rect x="3.3" y="72.2" width="1" height="1.5" fill="rgb(115,115,115)"/>
<rect x="3.6" y="74.6" width="1" height="2" fill="rgb(150,150,150)"/>
<rect x="2.1" y="76.1" width="1" height="1" fill="rgb(105,105,105)"/>
<rect x="4.6" y="4.5" width="1" height="2" fill="rgb(154,154,154)"/>
<rect x="3.4" y="32.2" width="1" height="2" fill="rgb(154,154,154)"/>
<rect x="2.6" y="62.1" width="1" height="1.5" fill="rgb(121,121,121)"/>
<rect x="1.9" y="79.9" width="1" height="1" fill="rgb(107,107,107)"/>
<rect x="4.2" y="25.3" width="1" height="2" fill="rgb(98,98,98)"/>
<rect x="3.3" y="60.3" width="1" height="1" fill="rgb(147,147,147)"/>
<rect x="4.9" y="39.0" width="1" height="1.5" fill="rgb(89,89,89)"/>
<rect x="4.0" y="65.5" width="1" height="2" fill="rgb(150,150,150)"/>
<rect x="4.0" y="83.0" width="1" height="2" fill="rgb(99,99,99)"/>
<rect x="22.2" y="85.1" width="3" height="1" fill="rgb(125,125,125)"/>
<rect x="29.3" y="84.5" width="1" height="1" fill="rgb(70,70,70)"/>
<rect x="35.1" y="86.0" width="1" height="1" fill="rgb(106,106,106)"/>
<rect x="36.7" y="85.3" width="1" height="1" fill="rgb(159,159,159)"/>
<rect x="40.5" y="85.7" width="2" height="1" fill="rgb(74,74,74)"/>
<rect x="11.1" y="86.5" width="1" height="1" fill="rgb(165,165,165)"/>
<rect x="19.1" y="85.9" width="3" height="1" fill="rgb(165,165,165)"/>
<rect x="34.9" y="84.3" width="2" height="1" fill="rgb(81,81,81)"/>
<rect x="45.5" y="0" width="1" height="92" fill="#e00000"/>
<rect x="0" y="91" width="46.5" height="1" fill="#e00000"/>
</g>
<g transform="translate(107.0,383.5)">
<rect width="47" height="92" fill="#171717"/>
<rect x="7.1" y="1.2" width="31" height="80.6" rx="3.5" fill="#e6e6e6"/>
<rect x="8.1" y="2.2" width="29.0" height="78.6" rx="2.6" fill="#d6d6d6"/>
<rect x="13.1" y="4.5" width="13.5" height="3.8" fill="#505050"/>
<rect x="9.7" y="10.7" width="6" height="62" fill="#3c3c3c"/>
<rect x="24.3" y="11.2" width="2.2" height="60" fill="#8c8c8c"/>
<rect x="21.3" y="12.2" width="1.2" height="58" fill="#b4b4b4"/>
<rect x="31.7" y="10.7" width="3.3" height="62" fill="#4c4c4c"/>
<rect x="13.1" y="75.7" width="13.5" height="3.8" fill="#505050"/>
<rect x="16.7" y="34.7" width="3.8" height="11" fill="#6e6e6e"/>
<rect x="41.0" y="83.4" width="2" height="2.2" fill="rgb(207,207,207)"/>
<rect x="42.3" y="65.5" width="2" height="1" fill="rgb(235,235,235)"/>
<rect x="40.3" y="60.2" width="1.5" height="1" fill="rgb(152,152,152)"/>
<rect x="41.8" y="5.8" width="1" height="2.2" fill="rgb(186,186,186)"/>
<rect x="42.1" y="16.1" width="2" height="1.5" fill="rgb(180,180,180)"/>
<rect x="39.8" y="23.5" width="1.5" height="1.5" fill="rgb(211,211,211)"/>
<rect x="41.6" y="10.0" width="1" height="2.2" fill="rgb(155,155,155)"/>
<rect x="41.7" y="62.8" width="2" height="1" fill="rgb(180,180,180)"/>
<rect x="41.8" y="2.5" width="2" height="1.5" fill="rgb(154,154,154)"/>
<rect x="40.0" y="62.0" width="2" height="2.2" fill="rgb(156,156,156)"/>
<rect x="41.6" y="22.7" width="2" height="1.5" fill="rgb(150,150,150)"/>
<rect x="40.1" y="67.4" width="2" height="1.5" fill="rgb(159,159,159)"/>
<rect x="40.9" y="74.2" width="1" height="2.2" fill="rgb(172,172,172)"/>
<rect x="40.8" y="26.9" width="1" height="1" fill="rgb(172,172,172)"/>
<rect x="40.6" y="79.0" width="2" height="1.5" fill="rgb(148,148,148)"/>
<rect x="40.0" y="40.5" width="1.5" height="1.5" fill="rgb(203,203,203)"/>
<rect x="40.5" y="50.9" width="1" height="1" fill="rgb(138,138,138)"/>
<rect x="42.7" y="42.3" width="1" height="2.2" fill="rgb(244,244,244)"/>
<rect x="42.7" y="63.7" width="1" height="2.2" fill="rgb(187,187,187)"/>
<rect x="41.0" y="44.0" width="2" height="1.5" fill="rgb(168,168,168)"/>
<rect x="42.5" y="2.7" width="2" height="2.2" fill="rgb(193,193,193)"/>
<rect x="41.7" y="82.4" width="2" height="1" fill="rgb(184,184,184)"/>
<rect x="42.0" y="8.7" width="1.5" height="1" fill="rgb(126,126,126)"/>
<rect x="40.2" y="27.5" width="1" height="2.2" fill="rgb(163,163,163)"/>
<rect x="42.0" y="73.4" width="1.5" height="1" fill="rgb(203,203,203)"/>
<rect x="40.7" y="57.7" width="1.5" height="1" fill="rgb(178,178,178)"/>
<rect x="3.2" y="49.4" width="1" height="1" fill="rgb(102,102,102)"/>
<rect x="2.0" y="7.0" width="1" height="2" fill="rgb(150,150,150)"/>
<rect x="1.7" y="36.7" width="1" height="1.5" fill="rgb(97,97,97)"/>
<rect x="4.8" y="38.4" width="1" height="2" fill="rgb(108,108,108)"/>
<rect x="1.9" y="52.0" width="1" height="1" fill="rgb(158,158,158)"/>
<rect x="3.5" y="16.1" width="1" height="1" fill="rgb(121,121,121)"/>
<rect x="5.3" y="86.2" width="1" height="1" fill="rgb(131,131,131)"/>
<rect x="3.2" y="20.8" width="1" height="2" fill="rgb(74,74,74)"/>
<rect x="5.0" y="75.6" width="1" height="1" fill="rgb(124,124,124)"/>
<rect x="4.5" y="26.4" width="1" height="2" fill="rgb(135,135,135)"/>
<rect x="3.0" y="38.2" width="1" height="1" fill="rgb(126,126,126)"/>
<rect x="5.2" y="59.3" width="1" height="1" fill="rgb(162,162,162)"/>
<rect x="1.5" y="34.6" width="1" height="2" fill="rgb(142,142,142)"/>
<rect x="2.4" y="31.9" width="1" height="2" fill="rgb(80,80,80)"/>
<rect x="15.6" y="84.9" width="3" height="1" fill="rgb(138,138,138)"/>
<rect x="36.8" y="86.7" width="3" height="1" fill="rgb(147,147,147)"/>
<rect x="6.2" y="86.1" width="3" height="1" fill="rgb(162,162,162)"/>
<rect x="15.9" y="85.6" width="3" height="1" fill="rgb(142,142,142)"/>
<rect x="19.4" y="84.6" width="3" height="1" fill="rgb(154,154,154)"/>
<rect x="8.3" y="86.3" width="3" height="1" fill="rgb(137,137,137)"/>
<rect x="4.1" y="84.0" width="3" height="1" fill="rgb(156,156,156)"/>
<rect x="20.4" y="83.6" width="3" height="1" fill="rgb(154,154,154)"/>
<rect x="46" y="0" width="1" height="92" fill="#e00000"/>
<rect x="0" y="91" width="47" height="1" fill="#e00000"/>
</g>
<g transform="translate(214.3,383.5)">
<rect width="47.2" height="92" fill="#171717"/>
<rect x="7.1" y="1.2" width="31" height="80.6" rx="3.5" fill="#e6e6e6"/>
<rect x="8.1" y="2.2" width="29.0" height="78.6" rx="2.6" fill="#d6d6d6"/>
<rect x="13.1" y="4.5" width="13.5" height="3.8" fill="#505050"/>
<rect x="9.7" y="10.7" width="6" height="62" fill="#3c3c3c"/>
<rect x="24.3" y="11.2" width="2.2" height="60" fill="#8c8c8c"/>
<rect x="21.3" y="12.2" width="1.2" height="58" fill="#b4b4b4"/>
<rect x="31.7" y="10.7" width="3.3" height="62" fill="#4c4c4c"/>
<rect x="13.1" y="75.7" width="13.5" height="3.8" fill="#505050"/>
<rect x="16.7" y="34.7" width="3.8" height="11" fill="#6e6e6e"/>
<rect x="41.5" y="34.0" width="1.5" height="2.2" fill="rgb(226,226,226)"/>
<rect x="41.0" y="22.7" width="1" height="1" fill="rgb(186,186,186)"/>
<rect x="42.4" y="17.5" width="1" height="1.5" fill="rgb(148,148,148)"/>
<rect x="40.2" y="57.9" width="2" height="1.5" fill="rgb(184,184,184)"/>
<rect x="41.1" y="21.5" width="2" height="2.2" fill="rgb(148,148,148)"/>
<rect x="41.4" y="80.2" width="2" height="1" fill="rgb(224,224,224)"/>
<rect x="40.0" y="70.8" width="2" height="2.2" fill="rgb(248,248,248)"/>
<rect x="42.0" y="63.5" width="2" height="2.2" fill="rgb(149,149,149)"/>
<rect x="41.1" y="46.3" width="2" height="1" fill="rgb(220,220,220)"/>
<rect x="40.2" y="85.2" width="1" height="1" fill="rgb(241,241,241)"/>
<rect x="41.6" y="34.1" width="1" height="1" fill="rgb(223,223,223)"/>
<rect x="39.6" y="34.0" width="1.5" height="1.5" fill="rgb(174,174,174)"/>
<rect x="40.0" y="12.4" width="2" height="1" fill="rgb(142,142,142)"/>
<rect x="42.5" y="50.4" width="1" height="1.5" fill="rgb(210,210,210)"/>
<rect x="40.7" y="66.1" width="1.5" height="1" fill="rgb(122,122,122)"/>
<rect x="41.2" y="22.6" width="2" height="1.5" fill="rgb(211,211,211)"/>
<rect x="41.5" y="5.7" width="1.5" height="2.2" fill="rgb(145,145,145)"/>
<rect x="41.5" y="30.2" width="2" height="1" fill="rgb(128,128,128)"/>
<rect x="40.2" y="23.9" width="1" height="2.2" fill="rgb(234,234,234)"/>
<rect x="42.1" y="39.8" width="1" height="1" fill="rgb(244,244,244)"/>
<rect x="40.2" y="70.9" width="2" height="2.2" fill="rgb(194,194,194)"/>
<rect x="40.1" y="34.8" width="2" height="2.2" fill="rgb(184,184,184)"/>
<rect x="40.5" y="67.5" width="1" height="1" fill="rgb(233,233,233)"/>
<rect x="40.1" y="31.4" width="1.5" height="1" fill="rgb(248,248,248)"/>
<rect x="39.7" y="70.8" width="2" height="2.2" fill="rgb(166,166,166)"/>
<rect x="40.9" y="60.4" width="1" height="2.2" fill="rgb(241,241,241)"/>
<rect x="3.3" y="74.7" width="1" height="2" fill="rgb(148,148,148)"/>
<rect x="3.0" y="8.5" width="1" height="1.5" fill="rgb(97,97,97)"/>
<rect x="4.2" y="78.9" width="1" height="1" fill="rgb(75,75,75)"/>
<rect x="3.1" y="16.6" width="1" height="1.5" fill="rgb(129,129,129)"/>
<rect x="3.2" y="51.6" width="1" height="1.5" fill="rgb(115,115,115)"/>
<rect x="4.1" y="2.5" width="1" height="1" fill="rgb(112,112,112)"/>
<rect x="3.6" y="3.8" width="1" height="1" fill="rgb(147,147,147)"/>
<rect x="4.8" y="56.3" width="1" height="1.5" fill="rgb(88,88,88)"/>
<rect x="1.8" y="35.1" width="1" height="1.5" fill="rgb(103,103,103)"/>
<rect x="3.9" y="50.9" width="1" height="2" fill="rgb(87,87,87)"/>
<rect x="4.0" y="4.9" width="1" height="1" fill="rgb(168,168,168)"/>
<rect x="5.0" y="77.0" width="1" height="2" fill="rgb(151,151,151)"/>
<rect x="3.1" y="56.6" width="1" height="1" fill="rgb(106,106,106)"/>
<rect x="5.7" y="77.1" width="1" height="1" fill="rgb(157,157,157)"/>
<rect x="14.9" y="86.0" width="2" height="1" fill="rgb(164,164,164)"/>
<rect x="22.9" y="85.5" width="3" height="1" fill="rgb(114,114,114)"/>
<rect x="31.1" y="84.5" width="2" height="1" fill="rgb(160,160,160)"/>
<rect x="29.3" y="86.4" width="2" height="1" fill="rgb(170,170,170)"/>
<rect x="22.7" y="86.4" width="2" height="1" fill="rgb(100,100,100)"/>
<rect x="8.9" y="84.0" width="2" height="1" fill="rgb(155,155,155)"/>
<rect x="18.9" y="84.7" width="2" height="1" fill="rgb(168,168,168)"/>
<rect x="39.4" y="85.4" width="2" height="1" fill="rgb(88,88,88)"/>
<rect x="46.2" y="0" width="1" height="92" fill="#e00000"/>
<rect x="0" y="91" width="47.2" height="1" fill="#e00000"/>
</g>
<g transform="translate(322.2,383.5)">
<rect width="47.3" height="92" fill="#171717"/>
<rect x="7.1" y="1.2" width="31" height="80.6" rx="3.5" fill="#e6e6e6"/>
<rect x="8.1" y="2.2" width="29.0" height="78.6" rx="2.6" fill="#d6d6d6"/>
<rect x="13.1" y="4.5" width="13.5" height="3.8" fill="#505050"/>
<rect x="9.7" y="10.7" width="6" height="62" fill="#3c3c3c"/>
<rect x="24.3" y="11.2" width="2.2" height="60" fill="#8c8c8c"/>
<rect x="21.3" y="12.2" width="1.2" height="58" fill="#b4b4b4"/>
<rect x="31.7" y="10.7" width="3.3" height="62" fill="#4c4c4c"/>
<rect x="13.1" y="75.7" width="13.5" height="3.8" fill="#505050"/>
<rect x="16.7" y="34.7" width="3.8" height="11" fill="#6e6e6e"/>
<rect x="40.4" y="63.9" width="1" height="1" fill="rgb(207,207,207)"/>
<rect x="39.9" y="52.2" width="1.5" height="2.2" fill="rgb(165,165,165)"/>
<rect x="41.1" y="32.4" width="2" height="1" fill="rgb(229,229,229)"/>
<rect x="40.6" y="74.1" width="1.5" height="1.5" fill="rgb(164,164,164)"/>
<rect x="42.0" y="49.0" width="1" height="2.2" fill="rgb(188,188,188)"/>
<rect x="39.8" y="3.7" width="1" height="2.2" fill="rgb(234,234,234)"/>
<rect x="41.2" y="26.3" width="1" height="1" fill="rgb(145,145,145)"/>
<rect x="42.7" y="65.1" width="1" height="1" fill="rgb(132,132,132)"/>
<rect x="42.4" y="71.6" width="2" height="1" fill="rgb(207,207,207)"/>
<rect x="40.5" y="2.4" width="2" height="1.5" fill="rgb(123,123,123)"/>
<rect x="40.3" y="81.4" width="2" height="1" fill="rgb(203,203,203)"/>
<rect x="40.9" y="57.8" width="1" height="1" fill="rgb(206,206,206)"/>
<rect x="42.1" y="76.2" width="2" height="2.2" fill="rgb(142,142,142)"/>
<rect x="41.2" y="30.8" width="1.5" height="1.5" fill="rgb(222,222,222)"/>
<rect x="39.7" y="77.1" width="2" height="2.2" fill="rgb(201,201,201)"/>
<rect x="39.8" y="86.9" width="1" height="1" fill="rgb(204,204,204)"/>
<rect x="40.3" y="3.6" width="1.5" height="1.5" fill="rgb(143,143,143)"/>
<rect x="41.3" y="38.4" width="2" height="2.2" fill="rgb(159,159,159)"/>
<rect x="40.3" y="51.4" width="2" height="1.5" fill="rgb(186,186,186)"/>
<rect x="42.1" y="67.6" width="2" height="2.2" fill="rgb(199,199,199)"/>
<rect x="41.1" y="86.1" width="1.5" height="2.2" fill="rgb(191,191,191)"/>
<rect x="40.5" y="47.5" width="1" height="2.2" fill="rgb(184,184,184)"/>
<rect x="41.7" y="42.9" width="1" height="2.2" fill="rgb(212,212,212)"/>
<rect x="42.0" y="21.6" width="1" height="2.2" fill="rgb(143,143,143)"/>
<rect x="39.8" y="13.5" width="1" height="2.2" fill="rgb(248,248,248)"/>
<rect x="40.4" y="68.9" width="2" height="1" fill="rgb(213,213,213)"/>
<rect x="5.4" y="79.6" width="1" height="1" fill="rgb(169,169,169)"/>
<rect x="3.1" y="47.5" width="1" height="1" fill="rgb(160,160,160)"/>
<rect x="5.4" y="40.0" width="1" height="2" fill="rgb(97,97,97)"/>
<rect x="5.6" y="80.5" width="1" height="1.5" fill="rgb(119,119,119)"/>
<rect x="5.1" y="20.2" width="1" height="1" fill="rgb(73,73,73)"/>
<rect x="1.6" y="58.8" width="1" height="1.5" fill="rgb(152,152,152)"/>
<rect x="3.1" y="60.0" width="1" height="2" fill="rgb(99,99,99)"/>
<rect x="5.6" y="34.3" width="1" height="2" fill="rgb(118,118,118)"/>
<rect x="2.5" y="55.9" width="1" height="1" fill="rgb(102,102,102)"/>
<rect x="3.5" y="24.6" width="1" height="1.5" fill="rgb(99,99,99)"/>
<rect x="4.9" y="19.5" width="1" height="1.5" fill="rgb(152,152,152)"/>
<rect x="6.0" y="27.7" width="1" height="2" fill="rgb(97,97,97)"/>
<rect x="3.6" y="70.0" width="1" height="1.5" fill="rgb(168,168,168)"/>
<rect x="2.1" y="84.1" width="1" height="1.5" fill="rgb(108,108,108)"/>
<rect x="6.5" y="83.3" width="1" height="1" fill="rgb(101,101,101)"/>
<rect x="15.6" y="85.4" width="1" height="1" fill="rgb(127,127,127)"/>
<rect x="25.8" y="86.4" width="3" height="1" fill="rgb(96,96,96)"/>
<rect x="17.2" y="86.0" width="1" height="1" fill="rgb(126,126,126)"/>
<rect x="20.1" y="83.8" width="3" height="1" fill="rgb(108,108,108)"/>
<rect x="4.0" y="83.7" width="1" height="1" fill="rgb(71,71,71)"/>
<rect x="38.8" y="83.8" width="2" height="1" fill="rgb(164,164,164)"/>
<rect x="6.8" y="83.9" width="2" height="1" fill="rgb(157,157,157)"/>
<rect x="46.3" y="0" width="1" height="92" fill="#e00000"/>
<rect x="0" y="91" width="47.3" height="1" fill="#e00000"/>
</g>
<g transform="translate(429.2,383.5)">
<rect width="48" height="92" fill="#171717"/>
<rect x="7.1" y="1.2" width="31" height="80.6" rx="3.5" fill="#e6e6e6"/>
<rect x="8.1" y="2.2" width="29.0" height="78.6" rx="2.6" fill="#d6d6d6"/>
<rect x="13.1" y="4.5" width="13.5" height="3.8" fill="#505050"/>
<rect x="9.7" y="10.7" width="6" height="62" fill="#3c3c3c"/>
<rect x="24.3" y="11.2" width="2.2" height="60" fill="#8c8c8c"/>
<rect x="21.3" y="12.2" width="1.2" height="58" fill="#b4b4b4"/>
<rect x="31.7" y="10.7" width="3.3" height="62" fill="#4c4c4c"/>
<rect x="13.1" y="75.7" width="13.5" height="3.8" fill="#505050"/>
<rect x="16.7" y="34.7" width="3.8" height="11" fill="#6e6e6e"/>
<rect x="40.7" y="9.8" width="1.5" height="1" fill="rgb(221,221,221)"/>
<rect x="40.2" y="52.3" width="1" height="1" fill="rgb(123,123,123)"/>
<rect x="40.3" y="45.4" width="2" height="1" fill="rgb(230,230,230)"/>
<rect x="39.8" y="64.7" width="1" height="1" fill="rgb(201,201,201)"/>
<rect x="41.2" y="12.4" width="2" height="1.5" fill="rgb(154,154,154)"/>
<rect x="40.3" y="2.2" width="2" height="2.2" fill="rgb(157,157,157)"/>
<rect x="42.8" y="48.9" width="1.5" height="1" fill="rgb(210,210,210)"/>
<rect x="40.3" y="32.1" width="2" height="1" fill="rgb(177,177,177)"/>
<rect x="40.2" y="25.5" width="1.5" height="1" fill="rgb(187,187,187)"/>
<rect x="40.2" y="85.1" width="1.5" height="2.2" fill="rgb(132,132,132)"/>
<rect x="40.5" y="83.9" width="2" height="1" fill="rgb(203,203,203)"/>
<rect x="41.3" y="58.2" width="2" height="1.5" fill="rgb(204,204,204)"/>
<rect x="42.4" y="86.5" width="1.5" height="1.5" fill="rgb(188,188,188)"/>
<rect x="40.9" y="29.4" width="1.5" height="1.5" fill="rgb(158,158,158)"/>
<rect x="42.2" y="77.8" width="1" height="2.2" fill="rgb(121,121,121)"/>
<rect x="42.8" y="45.1" width="1" height="1" fill="rgb(216,216,216)"/>
<rect x="39.9" y="59.1" width="2" height="1" fill="rgb(128,128,128)"/>
<rect x="41.4" y="36.9" width="2" height="2.2" fill="rgb(233,233,233)"/>
<rect x="42.7" y="29.1" width="1.5" height="2.2" fill="rgb(120,120,120)"/>
<rect x="41.1" y="57.7" width="2" height="2.2" fill="rgb(207,207,207)"/>
<rect x="40.4" y="87.5" width="1.5" height="2.2" fill="rgb(216,216,216)"/>
<rect x="42.7" y="7.5" width="2" height="2.2" fill="rgb(188,188,188)"/>
<rect x="40.6" y="60.2" width="2" height="1.5" fill="rgb(177,177,177)"/>
<rect x="42.3" y="24.6" width="2" height="2.2" fill="rgb(209,209,209)"/>
<rect x="40.3" y="43.0" width="1" height="2.2" fill="rgb(156,156,156)"/>
<rect x="40.3" y="33.3" width="1.5" height="1" fill="rgb(163,163,163)"/>
<rect x="2.2" y="59.9" width="1" height="1.5" fill="rgb(154,154,154)"/>
<rect x="5.8" y="17.3" width="1" height="1" fill="rgb(153,153,153)"/>
<rect x="3.1" y="29.7" width="1" height="1" fill="rgb(124,124,124)"/>
<rect x="4.7" y="37.3" width="1" height="1" fill="rgb(118,118,118)"/>
<rect x="4.5" y="33.4" width="1" height="2" fill="rgb(136,136,136)"/>
<rect x="4.5" y="28.0" width="1" height="1.5" fill="rgb(105,105,105)"/>
<rect x="3.5" y="27.0" width="1" height="1.5" fill="rgb(84,84,84)"/>
<rect x="4.8" y="56.6" width="1" height="2" fill="rgb(92,92,92)"/>
<rect x="4.6" y="14.9" width="1" height="1.5" fill="rgb(116,116,116)"/>
<rect x="2.6" y="46.8" width="1" height="2" fill="rgb(117,117,117)"/>
<rect x="3.2" y="31.2" width="1" height="2" fill="rgb(72,72,72)"/>
<rect x="4.1" y="19.3" width="1" height="2" fill="rgb(77,77,77)"/>
<rect x="4.7" y="17.3" width="1" height="1.5" fill="rgb(105,105,105)"/>
<rect x="2.7" y="24.0" width="1" height="1" fill="rgb(126,126,126)"/>
<rect x="24.0" y="85.0" width="1" height="1" fill="rgb(81,81,81)"/>
<rect x="8.1" y="86.7" width="3" height="1" fill="rgb(107,107,107)"/>
<rect x="34.2" y="86.5" width="2" height="1" fill="rgb(161,161,161)"/>
<rect x="18.0" y="83.4" width="2" height="1" fill="rgb(166,166,166)"/>
<rect x="41.8" y="84.8" width="2" height="1" fill="rgb(147,147,147)"/>
<rect x="17.1" y="84.6" width="1" height="1" fill="rgb(144,144,144)"/>
<rect x="40.0" y="84.0" width="3" height="1" fill="rgb(161,161,161)"/>
<rect x="17.9" y="85.6" width="1" height="1" fill="rgb(112,112,112)"/>
<rect x="47" y="0" width="1" height="92" fill="#e00000"/>
<rect x="0" y="91" width="48" height="1" fill="#e00000"/>
</g>
<g transform="translate(537.2,383.5)">
<rect width="47" height="92" fill="#171717"/>
<rect x="7.1" y="1.2" width="31" height="80.6" rx="3.5" fill="#e6e6e6"/>
<rect x="8.1" y="2.2" width="29.0" height="78.6" rx="2.6" fill="#d6d6d6"/>
<rect x="13.1" y="4.5" width="13.5" height="3.8" fill="#505050"/>
<rect x="9.7" y="10.7" width="6" height="62" fill="#3c3c3c"/>
<rect x="24.3" y="11.2" width="2.2" height="60" fill="#8c8c8c"/>
<rect x="21.3" y="12.2" width="1.2" height="58" fill="#b4b4b4"/>
<rect x="31.7" y="10.7" width="3.3" height="62" fill="#4c4c4c"/>
<rect x="13.1" y="75.7" width="13.5" height="3.8" fill="#505050"/>
<rect x="16.7" y="34.7" width="3.8" height="11" fill="#6e6e6e"/>
<rect x="41.0" y="8.9" width="2" height="1.5" fill="rgb(220,220,220)"/>
<rect x="42.5" y="44.7" width="1" height="2.2" fill="rgb(126,126,126)"/>
<rect x="42.6" y="50.5" width="1.5" height="1.5" fill="rgb(231,231,231)"/>
<rect x="39.8" y="17.2" width="1.5" height="1" fill="rgb(221,221,221)"/>
<rect x="42.2" y="46.0" width="2" height="1" fill="rgb(179,179,179)"/>
<rect x="39.7" y="36.5" width="2" height="1.5" fill="rgb(195,195,195)"/>
<rect x="42.1" y="68.2" width="1" height="1" fill="rgb(150,150,150)"/>
<rect x="41.4" y="74.9" width="1" height="1.5" fill="rgb(123,123,123)"/>
<rect x="42.0" y="9.6" width="1" height="2.2" fill="rgb(236,236,236)"/>
<rect x="40.7" y="19.2" width="2" height="2.2" fill="rgb(134,134,134)"/>
<rect x="42.3" y="66.3" width="1.5" height="1" fill="rgb(155,155,155)"/>
<rect x="40.1" y="77.0" width="1" height="2.2" fill="rgb(205,205,205)"/>
<rect x="40.2" y="86.5" width="2" height="1.5" fill="rgb(190,190,190)"/>
<rect x="40.8" y="9.4" width="2" height="1.5" fill="rgb(196,196,196)"/>
<rect x="40.9" y="45.9" width="1.5" height="1.5" fill="rgb(133,133,133)"/>
<rect x="40.8" y="23.4" width="2" height="1.5" fill="rgb(231,231,231)"/>
<rect x="40.0" y="28.2" width="2" height="2.2" fill="rgb(173,173,173)"/>
<rect x="41.1" y="34.1" width="2" height="2.2" fill="rgb(245,245,245)"/>
<rect x="42.6" y="14.2" width="1" height="1.5" fill="rgb(207,207,207)"/>
<rect x="41.4" y="81.1" width="2" height="1.5" fill="rgb(133,133,133)"/>
<rect x="39.8" y="2.7" width="1" height="1.5" fill="rgb(202,202,202)"/>
<rect x="41.0" y="20.9" width="2" height="1" fill="rgb(171,171,171)"/>
<rect x="41.5" y="71.0" width="1.5" height="2.2" fill="rgb(236,236,236)"/>
<rect x="42.4" y="40.3" width="1" height="1.5" fill="rgb(134,134,134)"/>
<rect x="40.0" y="75.8" width="1" height="2.2" fill="rgb(155,155,155)"/>
<rect x="39.6" y="44.8" width="1.5" height="1" fill="rgb(162,162,162)"/>
<rect x="4.5" y="60.0" width="1" height="1" fill="rgb(107,107,107)"/>
<rect x="2.2" y="48.0" width="1" height="2" fill="rgb(169,169,169)"/>
<rect x="2.0" y="19.8" width="1" height="1" fill="rgb(82,82,82)"/>
<rect x="5.8" y="69.4" width="1" height="1" fill="rgb(123,123,123)"/>
<rect x="2.7" y="58.7" width="1" height="2" fill="rgb(126,126,126)"/>
<rect x="5.4" y="38.5" width="1" height="1" fill="rgb(159,159,159)"/>
<rect x="5.3" y="5.6" width="1" height="1" fill="rgb(107,107,107)"/>
<rect x="5.1" y="77.2" width="1" height="2" fill="rgb(160,160,160)"/>
<rect x="2.9" y="63.9" width="1" height="1.5" fill="rgb(103,103,103)"/>
<rect x="2.5" y="49.2" width="1" height="1" fill="rgb(155,155,155)"/>
<rect x="1.6" y="35.7" width="1" height="1" fill="rgb(118,118,118)"/>
<rect x="2.5" y="57.1" width="1" height="2" fill="rgb(139,139,139)"/>
<rect x="3.6" y="10.0" width="1" height="1" fill="rgb(163,163,163)"/>
<rect x="4.6" y="39.0" width="1" height="1" fill="rgb(84,84,84)"/>
<rect x="35.3" y="83.7" width="3" height="1" fill="rgb(96,96,96)"/>
<rect x="39.6" y="85.1" width="2" height="1" fill="rgb(107,107,107)"/>
<rect x="16.6" y="85.9" width="1" height="1" fill="rgb(133,133,133)"/>
<rect x="10.8" y="84.3" width="3" height="1" fill="rgb(108,108,108)"/>
<rect x="25.8" y="85.9" width="1" height="1" fill="rgb(95,95,95)"/>
<rect x="21.3" y="86.0" width="1" height="1" fill="rgb(167,167,167)"/>
<rect x="25.6" y="84.3" width="3" height="1" fill="rgb(144,144,144)"/>
<rect x="6.9" y="83.3" width="1" height="1" fill="rgb(94,94,94)"/>
<rect x="46" y="0" width="1" height="92" fill="#e00000"/>
<rect x="0" y="91" width="47" height="1" fill="#e00000"/>
</g>
</g>
<g filter="url(#grain)"><rect x="1.0" y="1.0" width="44.0" height="89.5" fill="#000"/><rect x="108.0" y="1.0" width="44.5" height="89.5" fill="#000"/><rect x="215.3" y="1.0" width="44.7" height="89.5" fill="#000"/><rect x="323.2" y="1.0" width="44.8" height="89.5" fill="#000"/><rect x="430.2" y="1.0" width="45.5" height="89.5" fill="#000"/><rect x="538.2" y="1.0" width="44.5" height="89.5" fill="#000"/><rect x="1.0" y="192.6" width="44.0" height="89.5" fill="#000"/><rect x="108.0" y="192.6" width="44.5" height="89.5" fill="#000"/><rect x="215.3" y="192.6" width="44.7" height="89.5" fill="#000"/><rect x="323.2" y="192.6" width="44.8" height="89.5" fill="#000"/><rect x="430.2" y="192.6" width="45.5" height="89.5" fill="#000"/><rect x="538.2" y="192.6" width="44.5" height="89.5" fill="#000"/><rect x="1.0" y="384.5" width="44.0" height="89.5" fill="#000"/><rect x="108.0" y="384.5" width="44.5" height="89.5" fill="#000"/><rect x="215.3" y="384.5" width="44.7" height="89.5" fill="#000"/><rect x="323.2" y="384.5" width="44.8" height="89.5" fill="#000"/><rect x="430.2" y="384.5" width="45.5" height="89.5" fill="#000"/><rect x="538.2" y="384.5" width="44.5" height="89.5" fill="#000"/></g>
<g filter="url(#grainw)"><rect x="1.0" y="1.0" width="44.0" height="89.5" fill="#000"/><rect x="108.0" y="1.0" width="44.5" height="89.5" fill="#000"/><rect x="215.3" y="1.0" width="44.7" height="89.5" fill="#000"/><rect x="323.2" y="1.0" width="44.8" height="89.5" fill="#000"/><rect x="430.2" y="1.0" width="45.5" height="89.5" fill="#000"/><rect x="538.2" y="1.0" width="44.5" height="89.5" fill="#000"/><rect x="1.0" y="192.6" width="44.0" height="89.5" fill="#000"/><rect x="108.0" y="192.6" width="44.5" height="89.5" fill="#000"/><rect x="215.3" y="192.6" width="44.7" height="89.5" fill="#000"/><rect x="323.2" y="192.6" width="44.8" height="89.5" fill="#000"/><rect x="430.2" y="192.6" width="45.5" height="89.5" fill="#000"/><rect x="538.2" y="192.6" width="44.5" height="89.5" fill="#000"/><rect x="1.0" y="384.5" width="44.0" height="89.5" fill="#000"/><rect x="108.0" y="384.5" width="44.5" height="89.5" fill="#000"/><rect x="215.3" y="384.5" width="44.7" height="89.5" fill="#000"/><rect x="323.2" y="384.5" width="44.8" height="89.5" fill="#000"/><rect x="430.2" y="384.5" width="45.5" height="89.5" fill="#000"/><rect x="538.2" y="384.5" width="44.5" height="89.5" fill="#000"/></g>
<rect x="540.3" y="3.7" width="6.7" height="5.8" fill="#0a6a0a" fill-opacity="0.8"/><rect x="547.0" y="3.7" width="9" height="5.8" fill="#48c048" fill-opacity="0.6"/><rect x="540.3" y="10.6" width="15.7" height="8.2" fill="#0a6a0a" fill-opacity="0.75"/>
<g><rect x="465.5" y="453.5" width="15" height="15" rx="2.5" fill="none" stroke="#000" stroke-opacity="0.10"/><rect x="484.5" y="453.5" width="15" height="15" rx="2.5" fill="none" stroke="#000" stroke-opacity="0.10"/><path d="M487 456.5V465.5M497 456.5V465.5M487 461H497M490 459.5V462.5M492 459.5V462.5M494 459.5V462.5" stroke="#000" stroke-opacity="0.16" fill="none"/><rect x="503.5" y="453.5" width="15" height="15" rx="2.5" fill="none" stroke="#000" stroke-opacity="0.10"/><path d="M506 456L516 466M506 459V456H509" stroke="#000" stroke-opacity="0.16" fill="none"/><rect x="522.5" y="453.5" width="15" height="15" rx="2.5" fill="none" stroke="#000" stroke-opacity="0.10"/><path d="M530 455.5V466.5M524.5 461H535.5M528 457.5L530 455.5L532 457.5M528 464.5L530 466.5L532 464.5M526.5 459L524.5 461L526.5 463M533.5 459L535.5 461L533.5 463" stroke="#000" stroke-opacity="0.14" fill="none"/><rect x="540.5" y="453.5" width="15" height="15" rx="2.5" fill="none" stroke="#000" stroke-opacity="0.10"/></g>
<g font-family="'Liberation Sans', Arial, sans-serif" font-size="18.67" text-anchor="middle" fill="#101030" letter-spacing="-0.15" stroke="#101030" stroke-width="1.15" opacity="0.7" transform="translate(0.8,0.8)"><text x="22.4" y="51.3">1:1</text><text x="129.6" y="51.3">2:1</text><text x="237.0" y="51.3">3:1</text><text x="344.9" y="51.3">4:1</text><text x="452.3" y="51.3">5:1</text><text x="548.2" y="51.3">6:1</text><text x="22.4" y="242.9">1:2</text><text x="129.6" y="242.9">2:2</text><text x="237.0" y="242.9">3:2</text><text x="344.9" y="242.9">4:2</text><text x="452.3" y="242.9">5:2</text><text x="548.2" y="242.9">6:2</text><text x="22.4" y="434.8">1:3</text><text x="129.6" y="434.8">2:3</text><text x="237.0" y="434.8">3:3</text><text x="344.9" y="434.8">4:3</text><text x="452.3" y="434.8">5:3</text><text x="548.2" y="434.8">6:3</text></g>
<g font-family="'Liberation Sans', Arial, sans-serif" font-size="18.67" text-anchor="middle" letter-spacing="-0.15" fill="#ff0000" stroke="#ff0000" stroke-width="1.15"><text x="22.4" y="51.3">1:1</text><text x="129.6" y="51.3">2:1</text><text x="237.0" y="51.3">3:1</text><text x="344.9" y="51.3">4:1</text><text x="452.3" y="51.3">5:1</text><text x="548.2" y="51.3">6:1</text><text x="22.4" y="242.9">1:2</text><text x="129.6" y="242.9">2:2</text><text x="237.0" y="242.9">3:2</text><text x="344.9" y="242.9">4:2</text><text x="452.3" y="242.9">5:2</text><text x="548.2" y="242.9">6:2</text><text x="22.4" y="434.8">1:3</text><text x="129.6" y="434.8">2:3</text><text x="237.0" y="434.8">3:3</text><text x="344.9" y="434.8">4:3</text><text x="452.3" y="434.8">5:3</text><text x="548.2" y="434.8">6:3</text></g>
</svg>
<div id="scale" style="position:absolute;left:578px;top:92px;width:24px;height:474px;background:linear-gradient(to bottom,#fbfbfb 0%,#000 50%,#fbfbfb 100%);"></div>
<div style="position:absolute;left:578px;top:92px;width:1.4px;height:474px;background:#505050"></div>
<div style="position:absolute;left:578px;top:92px;width:24px;height:1px;background:#222"></div>
<div class="sl" style="top:109.2px;color:#2a2a2a">90</div><div class="sl" style="top:132.9px;color:#2a2a2a">80</div><div class="sl" style="top:156.7px;color:#2a2a2a">70</div><div class="sl" style="top:180.4px;color:#2a2a2a">60</div><div class="sl" style="top:204.2px;color:#2a2a2a">50</div><div class="sl" style="top:227.9px;color:#ffffff">40</div><div class="sl" style="top:251.7px;color:#ffffff">30</div><div class="sl" style="top:275.4px;color:#ffffff">20</div><div class="sl" style="top:299.2px;color:#ffffff">10</div><div class="sl" style="top:322.9px;color:#ffffff">0</div><div class="sl" style="top:346.7px;color:#ffffff">-10</div><div class="sl" style="top:370.4px;color:#ffffff">-20</div><div class="sl" style="top:394.2px;color:#ffffff">-30</div><div class="sl" style="top:417.9px;color:#ffffff">-40</div><div class="sl" style="top:441.7px;color:#2a2a2a">-50</div><div class="sl" style="top:465.4px;color:#2a2a2a">-60</div><div class="sl" style="top:489.2px;color:#2a2a2a">-70</div><div class="sl" style="top:513.0px;color:#2a2a2a">-80</div><div class="sl" style="top:536.7px;color:#2a2a2a">-90</div>

<!-- status bar -->
<div class="abs" style="left:8px;top:569px;width:597px;height:1px;background:#a9a9a9"></div>
<div class="abs" style="left:8px;top:570px;width:597px;height:21px;background:#fff"></div>
<div class="abs" style="left:9px;top:571px;width:594px;height:18px;background:#f0eeed"></div>
<div class="st" id="st0" style="left:12.0px;letter-spacing:-0.28px">Position:</div><div class="st" id="st1" style="left:59.1px;letter-spacing:-0.50px">3,584</div><div class="st" id="st2" style="left:89.8px;letter-spacing:-0.26px">(26.30 mm, 469.40 mm)</div><div class="st" id="st3" style="left:220.1px;letter-spacing:0.00px">|</div><div class="st" id="st4" style="left:229.5px;letter-spacing:-0.43px">Value:</div><div class="st" id="st5" style="left:263.1px;letter-spacing:0.00px">0</div><div class="st" id="st6" style="left:272.9px;letter-spacing:-0.64px">(0.00 %FSH)</div><div class="st" id="st7" style="left:342.2px;letter-spacing:0.00px">|</div><div class="st" id="st8" style="left:352.1px;letter-spacing:0.00px">Zoom:</div><div class="st" id="st9" style="left:389.7px;letter-spacing:-0.50px">51%</div><div class="st" id="st10" style="left:419.7px;letter-spacing:0.15px">Zoom To...</div>
<svg class="abs" style="left:483px;top:579px" width="6" height="4" viewBox="0 0 6 4"><path d="M0 0H6L3 3.6Z" fill="#111"/></svg>
</body></html>
